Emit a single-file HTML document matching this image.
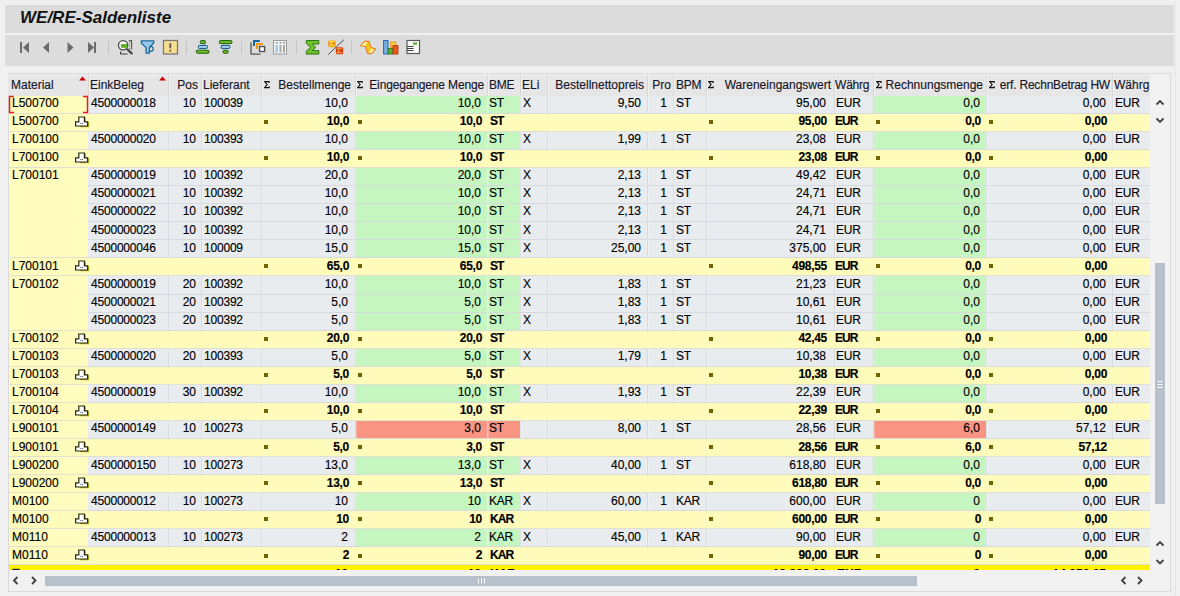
<!DOCTYPE html>
<html><head><meta charset="utf-8"><style>
html,body{margin:0;padding:0;}
body{width:1180px;height:596px;overflow:hidden;background:#f0f0f0;position:relative;font-family:"Liberation Sans",sans-serif;}
#g div, #g svg{position:absolute;}
#g div{box-sizing:border-box;}
.t,.tb{font-size:12px;line-height:17px;height:17px;color:#000;white-space:nowrap;overflow:visible;-webkit-text-stroke:0.15px #000;}
.tb{font-weight:bold;}
.h{font-size:12px;line-height:19px;height:19px;color:#16162a;white-space:nowrap;-webkit-text-stroke:0.15px #16162a;}
</style></head><body>
<div style="position:absolute;left:5px;top:5px;width:1169px;height:28px;background:#dcdcdc"></div>
<div style="position:absolute;left:20px;top:6px;font:bold italic 17px/24px 'Liberation Sans',sans-serif;color:#111">WE/RE-Saldenliste</div>
<div style="position:absolute;left:5px;top:35px;width:1169px;height:31px;background:#dcdcdc"></div>
<svg style="position:absolute;left:0;top:30px" width="440" height="36" viewBox="0 30 440 36">
 <g fill="#6c6c6c">
  <rect x="20" y="42" width="2" height="11"/>
  <path d="M29 42L23 47.5L29 53z"/>
  <path d="M49 42L43 47.5L49 53z"/>
  <path d="M67.5 42L73.5 47.5L67.5 53z"/>
  <path d="M88 42L94 47.5L88 53z"/>
  <rect x="94" y="42" width="2" height="11"/>
 </g>
 <g fill="#c2c2c2">
  <rect x="108" y="41" width="1" height="13"/>
  <rect x="186" y="41" width="1" height="13"/>
  <rect x="241" y="41" width="1" height="13"/>
  <rect x="296" y="41" width="1" height="13"/>
  <rect x="351" y="41" width="1" height="13"/>
 </g>
 <!-- find -->
 <g>
  <path d="M128.8 40.6h2.8v8.8" fill="none" stroke="#555" stroke-width="1.1"/>
  <path d="M120.6 51.6v2.4h7" fill="none" stroke="#444" stroke-width="1.2"/>
  <path d="M129.7 42v1M129.7 44v1M129.7 46v1M129.7 48v1" stroke="#5aa82a" stroke-width="1.1"/>
  <circle cx="123.1" cy="45.3" r="4.6" fill="#fff" stroke="#444" stroke-width="1.3"/>
  <path d="M120.9 44.1h6.5v3.7h-6.5z" fill="#5cb020"/>
  <path d="M127.6 49.5l4 3.8" stroke="#4a4a4a" stroke-width="2.4" stroke-linecap="round"/>
 </g>
 <!-- filter -->
 <g>
  <path d="M141.3 40.8h12.4v2.2l-4.4 4.6v5.6h-3.2v-5.6l-4.8-4.6z" fill="#9ccaec" stroke="#17689e" stroke-width="1.3" stroke-linejoin="round"/>
  <path d="M149.4 46.4c2.6-0.4 3.9 1 3.9 2.6s-1.4 2.6-3.9 2.3" fill="none" stroke="#17689e" stroke-width="1.3"/>
 </g>
 <!-- exception -->
 <g>
  <rect x="163.5" y="40.5" width="14" height="13.5" fill="#f6de8e" stroke="#787878" stroke-width="1.3"/>
  <rect x="169.4" y="43.3" width="1.8" height="5" fill="#555"/>
  <rect x="169.4" y="49.8" width="1.8" height="1.8" fill="#555"/>
 </g>
 <!-- sort asc -->
 <g stroke="#1f5a10" stroke-width="1">
  <rect x="200.4" y="40.6" width="5" height="3" rx="0.8" fill="#6cc020"/>
  <rect x="198.4" y="45.4" width="9" height="3" rx="0.8" fill="#a4d6f4" stroke="#0e5088"/>
  <rect x="196.4" y="50.2" width="12.5" height="3" rx="0.8" fill="#6cc020"/>
 </g>
 <g stroke="#1f5a10" stroke-width="1">
  <rect x="219.4" y="40.6" width="12.5" height="3" rx="0.8" fill="#6cc020"/>
  <rect x="221.2" y="45.4" width="8.6" height="3" rx="0.8" fill="#a4d6f4" stroke="#0e5088"/>
  <rect x="223.2" y="50.2" width="4.8" height="3" rx="0.8" fill="#6cc020"/>
 </g>
 <!-- layout -->
 <g>
  <path d="M251 42.2v12h9.5" fill="none" stroke="#585858" stroke-width="1.3"/>
  <path d="M254 46v-5h5.8" fill="none" stroke="#1462a8" stroke-width="2"/>
  <path d="M257 49v-5h5.8" fill="none" stroke="#f49a00" stroke-width="2"/>
  <rect x="259.6" y="46.5" width="5" height="5" fill="#fff" stroke="#505050" stroke-width="1.4"/>
 </g>
 <!-- columns -->
 <g>
  <rect x="273.5" y="40.5" width="13" height="13.5" fill="#f6f6f6" stroke="#9a9a9a" stroke-width="1"/>
  <rect x="275.5" y="42" width="2.4" height="1.6" fill="#8ab4d8"/>
  <rect x="279.5" y="42" width="2" height="1.6" fill="#9a9a9a"/>
  <rect x="283" y="42" width="2" height="1.6" fill="#9a9a9a"/>
  <rect x="275.5" y="45" width="2.4" height="7.5" fill="#9cc4e4"/>
  <rect x="279.5" y="45" width="2" height="7.5" fill="#a8a8a8"/>
  <rect x="283" y="45" width="2" height="7.5" fill="#a8a8a8"/>
 </g>
 <!-- sigma -->
 <g>
  <path d="M306.3 40.5h12.5v3.5h-6.5l3.5 3.3-3.5 3.3h6.5v3.5h-12.5v-3l4.3-3.8-4.3-3.8z" fill="#6cc424" stroke="#2a6a14" stroke-width="0.9" stroke-linejoin="round"/>
 </g>
 <g>
  <rect x="328.3" y="40.4" width="7.2" height="6.8" rx="1" fill="#f09010"/>
  <path d="M334 42.2v-0.8h-4.2l2.2 2.2-2.2 2.2h4.3v-0.8" fill="none" stroke="#ffe040" stroke-width="1.1"/>
  <rect x="335.9" y="47.3" width="7.2" height="7" rx="1" fill="#d83a10"/>
  <path d="M341.6 49.1v-0.8h-4.2l2.2 2.2-2.2 2.2h4.3v-0.8" fill="none" stroke="#f8a040" stroke-width="1.1"/>
  <path d="M328.3 54.5L343.8 39.8" stroke="#3a3a3a" stroke-width="0.9"/>
 </g>
 <!-- ribbon -->
 <g stroke-linejoin="round">
  <path d="M360.2 45.8L364.6 41.2L368.8 41.2L371 47.5L375.8 49L371.6 53.8L367.6 53.6L365.4 46.4z" fill="#f9c418" stroke="#e8701c" stroke-width="1"/>
  <path d="M361.4 45.5L365 42L367.4 42L365 45.7z" fill="#fff0b8"/>
  <path d="M369 53L371.3 48.4L374.6 49.2L371.2 53z" fill="#fff0b8"/>
 </g>
 <!-- chart -->
 <g>
  <rect x="383.6" y="40.5" width="4.4" height="13.5" fill="#7ab0e0" stroke="#1a68b8" stroke-width="1"/>
  <rect x="390.8" y="42" width="5" height="5.5" fill="#ffd040" stroke="#f08a10" stroke-width="0.9"/>
  <rect x="388.3" y="48.5" width="4.6" height="5.5" fill="#5ab22c" stroke="#2e7a1a" stroke-width="0.9"/>
  <rect x="393" y="45.5" width="5" height="8.5" fill="#e85a1e" stroke="#b03a10" stroke-width="0.9"/>
 </g>
 <!-- text doc -->
 <g>
  <rect x="407" y="40.5" width="12.5" height="13" fill="#fff" stroke="#5a5a5a" stroke-width="1.2"/>
  <rect x="413" y="42.4" width="4" height="2.3" fill="#58b02c"/>
  <path d="M407 46.5h6.6M407 48.5h6.6M407 50.5h6.6" stroke="#444" stroke-width="1"/>
 </g>
</svg>

<div style="position:absolute;left:8px;top:73px;width:1163px;height:519px;background:#f2f2f2;border:1px solid #dadada;box-sizing:border-box"></div>
<div id="g" style="position:absolute;left:0;top:0;width:1180px;height:570px;overflow:hidden">
<div style="left:8px;top:73px;width:1142px;height:23px;background:#e6e6e6"></div>
<div style="left:8px;top:73px;width:1142px;height:1px;background:#dcdcdc"></div>
<div style="left:8px;top:74px;width:1142px;height:3px;background:#eaeaea"></div>
<div style="left:88px;top:75px;width:1px;height:21px;background:#d6d6d6"></div>
<div style="left:89px;top:75px;width:1px;height:21px;background:#f2f2f2"></div>
<div style="left:168px;top:75px;width:1px;height:21px;background:#d6d6d6"></div>
<div style="left:169px;top:75px;width:1px;height:21px;background:#f2f2f2"></div>
<div style="left:201px;top:75px;width:1px;height:21px;background:#d6d6d6"></div>
<div style="left:202px;top:75px;width:1px;height:21px;background:#f2f2f2"></div>
<div style="left:261px;top:75px;width:1px;height:21px;background:#d6d6d6"></div>
<div style="left:262px;top:75px;width:1px;height:21px;background:#f2f2f2"></div>
<div style="left:355px;top:75px;width:1px;height:21px;background:#d6d6d6"></div>
<div style="left:356px;top:75px;width:1px;height:21px;background:#f2f2f2"></div>
<div style="left:487px;top:75px;width:1px;height:21px;background:#d6d6d6"></div>
<div style="left:488px;top:75px;width:1px;height:21px;background:#f2f2f2"></div>
<div style="left:520px;top:75px;width:1px;height:21px;background:#d6d6d6"></div>
<div style="left:521px;top:75px;width:1px;height:21px;background:#f2f2f2"></div>
<div style="left:547px;top:75px;width:1px;height:21px;background:#d6d6d6"></div>
<div style="left:548px;top:75px;width:1px;height:21px;background:#f2f2f2"></div>
<div style="left:647px;top:75px;width:1px;height:21px;background:#d6d6d6"></div>
<div style="left:648px;top:75px;width:1px;height:21px;background:#f2f2f2"></div>
<div style="left:673px;top:75px;width:1px;height:21px;background:#d6d6d6"></div>
<div style="left:674px;top:75px;width:1px;height:21px;background:#f2f2f2"></div>
<div style="left:706px;top:75px;width:1px;height:21px;background:#d6d6d6"></div>
<div style="left:707px;top:75px;width:1px;height:21px;background:#f2f2f2"></div>
<div style="left:834px;top:75px;width:1px;height:21px;background:#d6d6d6"></div>
<div style="left:835px;top:75px;width:1px;height:21px;background:#f2f2f2"></div>
<div style="left:873px;top:75px;width:1px;height:21px;background:#d6d6d6"></div>
<div style="left:874px;top:75px;width:1px;height:21px;background:#f2f2f2"></div>
<div style="left:986px;top:75px;width:1px;height:21px;background:#d6d6d6"></div>
<div style="left:987px;top:75px;width:1px;height:21px;background:#f2f2f2"></div>
<div style="left:1112px;top:75px;width:1px;height:21px;background:#d6d6d6"></div>
<div style="left:1113px;top:75px;width:1px;height:21px;background:#f2f2f2"></div>
<div class="h" style="left:11px;top:76px;width:80px;letter-spacing:0px">Material</div>
<div class="h" style="left:90px;top:76px;width:80px;letter-spacing:0px">EinkBeleg</div>
<div class="h" style="left:168px;top:76px;width:30px;text-align:right;letter-spacing:0px">Pos</div>
<div class="h" style="left:203px;top:76px;width:60px;letter-spacing:0px">Lieferant</div>
<svg style="position:absolute;left:264px;top:81px" width="7" height="8" viewBox="0 0 7 8"><path d="M5.1 1.9V0.6H0.7L3.1 3.6L0.7 6.6H5.2V5.3" fill="none" stroke="#111" stroke-width="1.1"/></svg>
<div class="h" style="left:261px;top:76px;width:90px;text-align:right;letter-spacing:0px">Bestellmenge</div>
<svg style="position:absolute;left:357px;top:81px" width="7" height="8" viewBox="0 0 7 8"><path d="M5.1 1.9V0.6H0.7L3.1 3.6L0.7 6.6H5.2V5.3" fill="none" stroke="#111" stroke-width="1.1"/></svg>
<div class="h" style="left:355px;top:76px;width:129px;text-align:right;letter-spacing:-0.15px">Eingegangene Menge</div>
<div class="h" style="left:489px;top:76px;width:33px;letter-spacing:-0.3px">BME</div>
<div class="h" style="left:522px;top:76px;width:27px;letter-spacing:0px">ELi</div>
<div class="h" style="left:547px;top:76px;width:97px;text-align:right;letter-spacing:0px">Bestellnettopreis</div>
<div class="h" style="left:647px;top:76px;width:24px;text-align:right;letter-spacing:0px">Pro</div>
<div class="h" style="left:676px;top:76px;width:33px;letter-spacing:-0.3px">BPM</div>
<svg style="position:absolute;left:708px;top:81px" width="7" height="8" viewBox="0 0 7 8"><path d="M5.1 1.9V0.6H0.7L3.1 3.6L0.7 6.6H5.2V5.3" fill="none" stroke="#111" stroke-width="1.1"/></svg>
<div class="h" style="left:706px;top:76px;width:125px;text-align:right;letter-spacing:0px">Wareneingangswert</div>
<div class="h" style="left:835px;top:76px;width:39px;letter-spacing:-0.2px">Währg</div>
<svg style="position:absolute;left:876px;top:81px" width="7" height="8" viewBox="0 0 7 8"><path d="M5.1 1.9V0.6H0.7L3.1 3.6L0.7 6.6H5.2V5.3" fill="none" stroke="#111" stroke-width="1.1"/></svg>
<div class="h" style="left:873px;top:76px;width:110px;text-align:right;letter-spacing:0px">Rechnungsmenge</div>
<svg style="position:absolute;left:989px;top:81px" width="7" height="8" viewBox="0 0 7 8"><path d="M5.1 1.9V0.6H0.7L3.1 3.6L0.7 6.6H5.2V5.3" fill="none" stroke="#111" stroke-width="1.1"/></svg>
<div class="h" style="left:986px;top:76px;width:124px;text-align:right;letter-spacing:-0.2px">erf. RechnBetrag HW</div>
<div class="h" style="left:1114px;top:76px;width:38px;letter-spacing:0px">Währg</div>
<svg style="position:absolute;left:79px;top:76px" width="8" height="5"><path d="M0 4.5L3.5 0.5L7 4.5z" fill="#cc0000"/></svg>
<svg style="position:absolute;left:159px;top:76px" width="8" height="5"><path d="M0 4.5L3.5 0.5L7 4.5z" fill="#cc0000"/></svg>
<div style="left:88px;top:96px;width:80px;height:18px;background:#e9ecef;"></div>
<div style="left:168px;top:96px;width:33px;height:18px;background:#e9ecef;"></div>
<div style="left:201px;top:96px;width:60px;height:18px;background:#e9ecef;"></div>
<div style="left:261px;top:96px;width:94px;height:18px;background:#e9ecef;"></div>
<div style="left:355px;top:96px;width:132px;height:18px;background:#c5f6c0;"></div>
<div style="left:487px;top:96px;width:33px;height:18px;background:#c5f6c0;"></div>
<div style="left:520px;top:96px;width:27px;height:18px;background:#e9ecef;"></div>
<div style="left:547px;top:96px;width:100px;height:18px;background:#e9ecef;"></div>
<div style="left:647px;top:96px;width:26px;height:18px;background:#e9ecef;"></div>
<div style="left:673px;top:96px;width:33px;height:18px;background:#e9ecef;"></div>
<div style="left:706px;top:96px;width:128px;height:18px;background:#e9ecef;"></div>
<div style="left:834px;top:96px;width:39px;height:18px;background:#e9ecef;"></div>
<div style="left:873px;top:96px;width:113px;height:18px;background:#c5f6c0;"></div>
<div style="left:986px;top:96px;width:126px;height:18px;background:#e9ecef;"></div>
<div style="left:1112px;top:96px;width:38px;height:18px;background:#e9ecef;"></div>
<div style="left:168px;top:96px;width:1px;height:18px;background:#d8dadf"></div>
<div style="left:169px;top:96px;width:1px;height:17px;background:rgba(255,255,255,0.25)"></div>
<div style="left:201px;top:96px;width:1px;height:18px;background:#d8dadf"></div>
<div style="left:202px;top:96px;width:1px;height:17px;background:rgba(255,255,255,0.25)"></div>
<div style="left:261px;top:96px;width:1px;height:18px;background:#d8dadf"></div>
<div style="left:262px;top:96px;width:1px;height:17px;background:rgba(255,255,255,0.25)"></div>
<div style="left:355px;top:96px;width:1px;height:18px;background:#d8dadf"></div>
<div style="left:356px;top:96px;width:1px;height:17px;background:rgba(255,255,255,0.25)"></div>
<div style="left:487px;top:96px;width:1px;height:18px;background:rgba(255,255,255,0.45)"></div>
<div style="left:488px;top:96px;width:1px;height:17px;background:rgba(255,255,255,0.25)"></div>
<div style="left:520px;top:96px;width:1px;height:18px;background:rgba(0,0,0,0.04)"></div>
<div style="left:521px;top:96px;width:1px;height:17px;background:rgba(255,255,255,0.25)"></div>
<div style="left:547px;top:96px;width:1px;height:18px;background:#d8dadf"></div>
<div style="left:548px;top:96px;width:1px;height:17px;background:rgba(255,255,255,0.25)"></div>
<div style="left:647px;top:96px;width:1px;height:18px;background:#d8dadf"></div>
<div style="left:648px;top:96px;width:1px;height:17px;background:rgba(255,255,255,0.25)"></div>
<div style="left:673px;top:96px;width:1px;height:18px;background:#d8dadf"></div>
<div style="left:674px;top:96px;width:1px;height:17px;background:rgba(255,255,255,0.25)"></div>
<div style="left:706px;top:96px;width:1px;height:18px;background:#d8dadf"></div>
<div style="left:707px;top:96px;width:1px;height:17px;background:rgba(255,255,255,0.25)"></div>
<div style="left:834px;top:96px;width:1px;height:18px;background:#d8dadf"></div>
<div style="left:835px;top:96px;width:1px;height:17px;background:rgba(255,255,255,0.25)"></div>
<div style="left:873px;top:96px;width:1px;height:18px;background:#d8dadf"></div>
<div style="left:874px;top:96px;width:1px;height:17px;background:rgba(255,255,255,0.25)"></div>
<div style="left:986px;top:96px;width:1px;height:18px;background:rgba(0,0,0,0.04)"></div>
<div style="left:987px;top:96px;width:1px;height:17px;background:rgba(255,255,255,0.25)"></div>
<div style="left:1112px;top:96px;width:1px;height:18px;background:#d8dadf"></div>
<div style="left:1113px;top:96px;width:1px;height:17px;background:rgba(255,255,255,0.25)"></div>
<div style="left:88px;top:113px;width:1062px;height:1px;background:#d8dadf;"></div>
<div class="t" style="left:91px;top:95px;width:77px;letter-spacing:-0.2px">4500000018</div>
<div class="t" style="left:168px;top:95px;width:28px;text-align:right;">10</div>
<div class="t" style="left:204px;top:95px;width:57px;letter-spacing:-0.2px">100039</div>
<div class="t" style="left:261px;top:95px;width:87px;text-align:right;">10,0</div>
<div class="t" style="left:355px;top:95px;width:126px;text-align:right;">10,0</div>
<div class="t" style="left:489px;top:95px;width:30px;letter-spacing:-0.2px">ST</div>
<div class="t" style="left:523px;top:95px;width:24px;letter-spacing:-0.2px">X</div>
<div class="t" style="left:547px;top:95px;width:94px;text-align:right;">9,50</div>
<div class="t" style="left:647px;top:95px;width:20px;text-align:right;">1</div>
<div class="t" style="left:676px;top:95px;width:30px;letter-spacing:-0.2px">ST</div>
<div class="t" style="left:706px;top:95px;width:120px;text-align:right;">95,00</div>
<div class="t" style="left:836px;top:95px;width:36px;letter-spacing:-0.2px">EUR</div>
<div class="t" style="left:873px;top:95px;width:107px;text-align:right;">0,0</div>
<div class="t" style="left:986px;top:95px;width:120px;text-align:right;">0,00</div>
<div class="t" style="left:1115px;top:95px;width:35px;letter-spacing:-0.2px">EUR</div>
<div style="left:88px;top:114px;width:1062px;height:18px;background:#fffcbb;"></div>
<div style="left:88px;top:131px;width:1062px;height:1px;background:#e2e0d0;"></div>
<div class="tb" style="left:261px;top:113px;width:88px;text-align:right;letter-spacing:-0.3px">10,0</div>
<div class="tb" style="left:355px;top:113px;width:127px;text-align:right;letter-spacing:-0.3px">10,0</div>
<div class="tb" style="left:490px;top:113px;width:30px;letter-spacing:-0.9px">ST</div>
<div class="tb" style="left:706px;top:113px;width:121px;text-align:right;letter-spacing:-0.3px">95,00</div>
<div class="tb" style="left:835px;top:113px;width:36px;letter-spacing:-0.9px">EUR</div>
<div class="tb" style="left:873px;top:113px;width:108px;text-align:right;letter-spacing:-0.3px">0,0</div>
<div class="tb" style="left:986px;top:113px;width:121px;text-align:right;letter-spacing:-0.3px">0,00</div>
<div style="left:264px;top:120px;width:4px;height:4px;background:#6e6400;"></div>
<div style="left:358px;top:120px;width:4px;height:4px;background:#6e6400;"></div>
<div style="left:709px;top:120px;width:4px;height:4px;background:#6e6400;"></div>
<div style="left:876px;top:120px;width:4px;height:4px;background:#6e6400;"></div>
<div style="left:989px;top:120px;width:4px;height:4px;background:#6e6400;"></div>
<div style="left:88px;top:132px;width:80px;height:18px;background:#e9ecef;"></div>
<div style="left:168px;top:132px;width:33px;height:18px;background:#e9ecef;"></div>
<div style="left:201px;top:132px;width:60px;height:18px;background:#e9ecef;"></div>
<div style="left:261px;top:132px;width:94px;height:18px;background:#e9ecef;"></div>
<div style="left:355px;top:132px;width:132px;height:18px;background:#c5f6c0;"></div>
<div style="left:487px;top:132px;width:33px;height:18px;background:#c5f6c0;"></div>
<div style="left:520px;top:132px;width:27px;height:18px;background:#e9ecef;"></div>
<div style="left:547px;top:132px;width:100px;height:18px;background:#e9ecef;"></div>
<div style="left:647px;top:132px;width:26px;height:18px;background:#e9ecef;"></div>
<div style="left:673px;top:132px;width:33px;height:18px;background:#e9ecef;"></div>
<div style="left:706px;top:132px;width:128px;height:18px;background:#e9ecef;"></div>
<div style="left:834px;top:132px;width:39px;height:18px;background:#e9ecef;"></div>
<div style="left:873px;top:132px;width:113px;height:18px;background:#c5f6c0;"></div>
<div style="left:986px;top:132px;width:126px;height:18px;background:#e9ecef;"></div>
<div style="left:1112px;top:132px;width:38px;height:18px;background:#e9ecef;"></div>
<div style="left:168px;top:132px;width:1px;height:18px;background:#d8dadf"></div>
<div style="left:169px;top:132px;width:1px;height:17px;background:rgba(255,255,255,0.25)"></div>
<div style="left:201px;top:132px;width:1px;height:18px;background:#d8dadf"></div>
<div style="left:202px;top:132px;width:1px;height:17px;background:rgba(255,255,255,0.25)"></div>
<div style="left:261px;top:132px;width:1px;height:18px;background:#d8dadf"></div>
<div style="left:262px;top:132px;width:1px;height:17px;background:rgba(255,255,255,0.25)"></div>
<div style="left:355px;top:132px;width:1px;height:18px;background:#d8dadf"></div>
<div style="left:356px;top:132px;width:1px;height:17px;background:rgba(255,255,255,0.25)"></div>
<div style="left:487px;top:132px;width:1px;height:18px;background:rgba(255,255,255,0.45)"></div>
<div style="left:488px;top:132px;width:1px;height:17px;background:rgba(255,255,255,0.25)"></div>
<div style="left:520px;top:132px;width:1px;height:18px;background:rgba(0,0,0,0.04)"></div>
<div style="left:521px;top:132px;width:1px;height:17px;background:rgba(255,255,255,0.25)"></div>
<div style="left:547px;top:132px;width:1px;height:18px;background:#d8dadf"></div>
<div style="left:548px;top:132px;width:1px;height:17px;background:rgba(255,255,255,0.25)"></div>
<div style="left:647px;top:132px;width:1px;height:18px;background:#d8dadf"></div>
<div style="left:648px;top:132px;width:1px;height:17px;background:rgba(255,255,255,0.25)"></div>
<div style="left:673px;top:132px;width:1px;height:18px;background:#d8dadf"></div>
<div style="left:674px;top:132px;width:1px;height:17px;background:rgba(255,255,255,0.25)"></div>
<div style="left:706px;top:132px;width:1px;height:18px;background:#d8dadf"></div>
<div style="left:707px;top:132px;width:1px;height:17px;background:rgba(255,255,255,0.25)"></div>
<div style="left:834px;top:132px;width:1px;height:18px;background:#d8dadf"></div>
<div style="left:835px;top:132px;width:1px;height:17px;background:rgba(255,255,255,0.25)"></div>
<div style="left:873px;top:132px;width:1px;height:18px;background:#d8dadf"></div>
<div style="left:874px;top:132px;width:1px;height:17px;background:rgba(255,255,255,0.25)"></div>
<div style="left:986px;top:132px;width:1px;height:18px;background:rgba(0,0,0,0.04)"></div>
<div style="left:987px;top:132px;width:1px;height:17px;background:rgba(255,255,255,0.25)"></div>
<div style="left:1112px;top:132px;width:1px;height:18px;background:#d8dadf"></div>
<div style="left:1113px;top:132px;width:1px;height:17px;background:rgba(255,255,255,0.25)"></div>
<div style="left:88px;top:149px;width:1062px;height:1px;background:#d8dadf;"></div>
<div class="t" style="left:91px;top:131px;width:77px;letter-spacing:-0.2px">4500000020</div>
<div class="t" style="left:168px;top:131px;width:28px;text-align:right;">10</div>
<div class="t" style="left:204px;top:131px;width:57px;letter-spacing:-0.2px">100393</div>
<div class="t" style="left:261px;top:131px;width:87px;text-align:right;">10,0</div>
<div class="t" style="left:355px;top:131px;width:126px;text-align:right;">10,0</div>
<div class="t" style="left:489px;top:131px;width:30px;letter-spacing:-0.2px">ST</div>
<div class="t" style="left:523px;top:131px;width:24px;letter-spacing:-0.2px">X</div>
<div class="t" style="left:547px;top:131px;width:94px;text-align:right;">1,99</div>
<div class="t" style="left:647px;top:131px;width:20px;text-align:right;">1</div>
<div class="t" style="left:676px;top:131px;width:30px;letter-spacing:-0.2px">ST</div>
<div class="t" style="left:706px;top:131px;width:120px;text-align:right;">23,08</div>
<div class="t" style="left:836px;top:131px;width:36px;letter-spacing:-0.2px">EUR</div>
<div class="t" style="left:873px;top:131px;width:107px;text-align:right;">0,0</div>
<div class="t" style="left:986px;top:131px;width:120px;text-align:right;">0,00</div>
<div class="t" style="left:1115px;top:131px;width:35px;letter-spacing:-0.2px">EUR</div>
<div style="left:88px;top:150px;width:1062px;height:18px;background:#fffcbb;"></div>
<div style="left:88px;top:167px;width:1062px;height:1px;background:#e2e0d0;"></div>
<div class="tb" style="left:261px;top:149px;width:88px;text-align:right;letter-spacing:-0.3px">10,0</div>
<div class="tb" style="left:355px;top:149px;width:127px;text-align:right;letter-spacing:-0.3px">10,0</div>
<div class="tb" style="left:490px;top:149px;width:30px;letter-spacing:-0.9px">ST</div>
<div class="tb" style="left:706px;top:149px;width:121px;text-align:right;letter-spacing:-0.3px">23,08</div>
<div class="tb" style="left:835px;top:149px;width:36px;letter-spacing:-0.9px">EUR</div>
<div class="tb" style="left:873px;top:149px;width:108px;text-align:right;letter-spacing:-0.3px">0,0</div>
<div class="tb" style="left:986px;top:149px;width:121px;text-align:right;letter-spacing:-0.3px">0,00</div>
<div style="left:264px;top:156px;width:4px;height:4px;background:#6e6400;"></div>
<div style="left:358px;top:156px;width:4px;height:4px;background:#6e6400;"></div>
<div style="left:709px;top:156px;width:4px;height:4px;background:#6e6400;"></div>
<div style="left:876px;top:156px;width:4px;height:4px;background:#6e6400;"></div>
<div style="left:989px;top:156px;width:4px;height:4px;background:#6e6400;"></div>
<div style="left:88px;top:168px;width:80px;height:18px;background:#e9ecef;"></div>
<div style="left:168px;top:168px;width:33px;height:18px;background:#e9ecef;"></div>
<div style="left:201px;top:168px;width:60px;height:18px;background:#e9ecef;"></div>
<div style="left:261px;top:168px;width:94px;height:18px;background:#e9ecef;"></div>
<div style="left:355px;top:168px;width:132px;height:18px;background:#c5f6c0;"></div>
<div style="left:487px;top:168px;width:33px;height:18px;background:#c5f6c0;"></div>
<div style="left:520px;top:168px;width:27px;height:18px;background:#e9ecef;"></div>
<div style="left:547px;top:168px;width:100px;height:18px;background:#e9ecef;"></div>
<div style="left:647px;top:168px;width:26px;height:18px;background:#e9ecef;"></div>
<div style="left:673px;top:168px;width:33px;height:18px;background:#e9ecef;"></div>
<div style="left:706px;top:168px;width:128px;height:18px;background:#e9ecef;"></div>
<div style="left:834px;top:168px;width:39px;height:18px;background:#e9ecef;"></div>
<div style="left:873px;top:168px;width:113px;height:18px;background:#c5f6c0;"></div>
<div style="left:986px;top:168px;width:126px;height:18px;background:#e9ecef;"></div>
<div style="left:1112px;top:168px;width:38px;height:18px;background:#e9ecef;"></div>
<div style="left:168px;top:168px;width:1px;height:18px;background:#d8dadf"></div>
<div style="left:169px;top:168px;width:1px;height:17px;background:rgba(255,255,255,0.25)"></div>
<div style="left:201px;top:168px;width:1px;height:18px;background:#d8dadf"></div>
<div style="left:202px;top:168px;width:1px;height:17px;background:rgba(255,255,255,0.25)"></div>
<div style="left:261px;top:168px;width:1px;height:18px;background:#d8dadf"></div>
<div style="left:262px;top:168px;width:1px;height:17px;background:rgba(255,255,255,0.25)"></div>
<div style="left:355px;top:168px;width:1px;height:18px;background:#d8dadf"></div>
<div style="left:356px;top:168px;width:1px;height:17px;background:rgba(255,255,255,0.25)"></div>
<div style="left:487px;top:168px;width:1px;height:18px;background:rgba(255,255,255,0.45)"></div>
<div style="left:488px;top:168px;width:1px;height:17px;background:rgba(255,255,255,0.25)"></div>
<div style="left:520px;top:168px;width:1px;height:18px;background:rgba(0,0,0,0.04)"></div>
<div style="left:521px;top:168px;width:1px;height:17px;background:rgba(255,255,255,0.25)"></div>
<div style="left:547px;top:168px;width:1px;height:18px;background:#d8dadf"></div>
<div style="left:548px;top:168px;width:1px;height:17px;background:rgba(255,255,255,0.25)"></div>
<div style="left:647px;top:168px;width:1px;height:18px;background:#d8dadf"></div>
<div style="left:648px;top:168px;width:1px;height:17px;background:rgba(255,255,255,0.25)"></div>
<div style="left:673px;top:168px;width:1px;height:18px;background:#d8dadf"></div>
<div style="left:674px;top:168px;width:1px;height:17px;background:rgba(255,255,255,0.25)"></div>
<div style="left:706px;top:168px;width:1px;height:18px;background:#d8dadf"></div>
<div style="left:707px;top:168px;width:1px;height:17px;background:rgba(255,255,255,0.25)"></div>
<div style="left:834px;top:168px;width:1px;height:18px;background:#d8dadf"></div>
<div style="left:835px;top:168px;width:1px;height:17px;background:rgba(255,255,255,0.25)"></div>
<div style="left:873px;top:168px;width:1px;height:18px;background:#d8dadf"></div>
<div style="left:874px;top:168px;width:1px;height:17px;background:rgba(255,255,255,0.25)"></div>
<div style="left:986px;top:168px;width:1px;height:18px;background:rgba(0,0,0,0.04)"></div>
<div style="left:987px;top:168px;width:1px;height:17px;background:rgba(255,255,255,0.25)"></div>
<div style="left:1112px;top:168px;width:1px;height:18px;background:#d8dadf"></div>
<div style="left:1113px;top:168px;width:1px;height:17px;background:rgba(255,255,255,0.25)"></div>
<div style="left:88px;top:185px;width:1062px;height:1px;background:#d8dadf;"></div>
<div class="t" style="left:91px;top:167px;width:77px;letter-spacing:-0.2px">4500000019</div>
<div class="t" style="left:168px;top:167px;width:28px;text-align:right;">10</div>
<div class="t" style="left:204px;top:167px;width:57px;letter-spacing:-0.2px">100392</div>
<div class="t" style="left:261px;top:167px;width:87px;text-align:right;">20,0</div>
<div class="t" style="left:355px;top:167px;width:126px;text-align:right;">20,0</div>
<div class="t" style="left:489px;top:167px;width:30px;letter-spacing:-0.2px">ST</div>
<div class="t" style="left:523px;top:167px;width:24px;letter-spacing:-0.2px">X</div>
<div class="t" style="left:547px;top:167px;width:94px;text-align:right;">2,13</div>
<div class="t" style="left:647px;top:167px;width:20px;text-align:right;">1</div>
<div class="t" style="left:676px;top:167px;width:30px;letter-spacing:-0.2px">ST</div>
<div class="t" style="left:706px;top:167px;width:120px;text-align:right;">49,42</div>
<div class="t" style="left:836px;top:167px;width:36px;letter-spacing:-0.2px">EUR</div>
<div class="t" style="left:873px;top:167px;width:107px;text-align:right;">0,0</div>
<div class="t" style="left:986px;top:167px;width:120px;text-align:right;">0,00</div>
<div class="t" style="left:1115px;top:167px;width:35px;letter-spacing:-0.2px">EUR</div>
<div style="left:88px;top:186px;width:80px;height:18px;background:#e9ecef;"></div>
<div style="left:168px;top:186px;width:33px;height:18px;background:#e9ecef;"></div>
<div style="left:201px;top:186px;width:60px;height:18px;background:#e9ecef;"></div>
<div style="left:261px;top:186px;width:94px;height:18px;background:#e9ecef;"></div>
<div style="left:355px;top:186px;width:132px;height:18px;background:#c5f6c0;"></div>
<div style="left:487px;top:186px;width:33px;height:18px;background:#c5f6c0;"></div>
<div style="left:520px;top:186px;width:27px;height:18px;background:#e9ecef;"></div>
<div style="left:547px;top:186px;width:100px;height:18px;background:#e9ecef;"></div>
<div style="left:647px;top:186px;width:26px;height:18px;background:#e9ecef;"></div>
<div style="left:673px;top:186px;width:33px;height:18px;background:#e9ecef;"></div>
<div style="left:706px;top:186px;width:128px;height:18px;background:#e9ecef;"></div>
<div style="left:834px;top:186px;width:39px;height:18px;background:#e9ecef;"></div>
<div style="left:873px;top:186px;width:113px;height:18px;background:#c5f6c0;"></div>
<div style="left:986px;top:186px;width:126px;height:18px;background:#e9ecef;"></div>
<div style="left:1112px;top:186px;width:38px;height:18px;background:#e9ecef;"></div>
<div style="left:168px;top:186px;width:1px;height:18px;background:#d8dadf"></div>
<div style="left:169px;top:186px;width:1px;height:17px;background:rgba(255,255,255,0.25)"></div>
<div style="left:201px;top:186px;width:1px;height:18px;background:#d8dadf"></div>
<div style="left:202px;top:186px;width:1px;height:17px;background:rgba(255,255,255,0.25)"></div>
<div style="left:261px;top:186px;width:1px;height:18px;background:#d8dadf"></div>
<div style="left:262px;top:186px;width:1px;height:17px;background:rgba(255,255,255,0.25)"></div>
<div style="left:355px;top:186px;width:1px;height:18px;background:#d8dadf"></div>
<div style="left:356px;top:186px;width:1px;height:17px;background:rgba(255,255,255,0.25)"></div>
<div style="left:487px;top:186px;width:1px;height:18px;background:rgba(255,255,255,0.45)"></div>
<div style="left:488px;top:186px;width:1px;height:17px;background:rgba(255,255,255,0.25)"></div>
<div style="left:520px;top:186px;width:1px;height:18px;background:rgba(0,0,0,0.04)"></div>
<div style="left:521px;top:186px;width:1px;height:17px;background:rgba(255,255,255,0.25)"></div>
<div style="left:547px;top:186px;width:1px;height:18px;background:#d8dadf"></div>
<div style="left:548px;top:186px;width:1px;height:17px;background:rgba(255,255,255,0.25)"></div>
<div style="left:647px;top:186px;width:1px;height:18px;background:#d8dadf"></div>
<div style="left:648px;top:186px;width:1px;height:17px;background:rgba(255,255,255,0.25)"></div>
<div style="left:673px;top:186px;width:1px;height:18px;background:#d8dadf"></div>
<div style="left:674px;top:186px;width:1px;height:17px;background:rgba(255,255,255,0.25)"></div>
<div style="left:706px;top:186px;width:1px;height:18px;background:#d8dadf"></div>
<div style="left:707px;top:186px;width:1px;height:17px;background:rgba(255,255,255,0.25)"></div>
<div style="left:834px;top:186px;width:1px;height:18px;background:#d8dadf"></div>
<div style="left:835px;top:186px;width:1px;height:17px;background:rgba(255,255,255,0.25)"></div>
<div style="left:873px;top:186px;width:1px;height:18px;background:#d8dadf"></div>
<div style="left:874px;top:186px;width:1px;height:17px;background:rgba(255,255,255,0.25)"></div>
<div style="left:986px;top:186px;width:1px;height:18px;background:rgba(0,0,0,0.04)"></div>
<div style="left:987px;top:186px;width:1px;height:17px;background:rgba(255,255,255,0.25)"></div>
<div style="left:1112px;top:186px;width:1px;height:18px;background:#d8dadf"></div>
<div style="left:1113px;top:186px;width:1px;height:17px;background:rgba(255,255,255,0.25)"></div>
<div style="left:88px;top:203px;width:1062px;height:1px;background:#d8dadf;"></div>
<div class="t" style="left:91px;top:185px;width:77px;letter-spacing:-0.2px">4500000021</div>
<div class="t" style="left:168px;top:185px;width:28px;text-align:right;">10</div>
<div class="t" style="left:204px;top:185px;width:57px;letter-spacing:-0.2px">100392</div>
<div class="t" style="left:261px;top:185px;width:87px;text-align:right;">10,0</div>
<div class="t" style="left:355px;top:185px;width:126px;text-align:right;">10,0</div>
<div class="t" style="left:489px;top:185px;width:30px;letter-spacing:-0.2px">ST</div>
<div class="t" style="left:523px;top:185px;width:24px;letter-spacing:-0.2px">X</div>
<div class="t" style="left:547px;top:185px;width:94px;text-align:right;">2,13</div>
<div class="t" style="left:647px;top:185px;width:20px;text-align:right;">1</div>
<div class="t" style="left:676px;top:185px;width:30px;letter-spacing:-0.2px">ST</div>
<div class="t" style="left:706px;top:185px;width:120px;text-align:right;">24,71</div>
<div class="t" style="left:836px;top:185px;width:36px;letter-spacing:-0.2px">EUR</div>
<div class="t" style="left:873px;top:185px;width:107px;text-align:right;">0,0</div>
<div class="t" style="left:986px;top:185px;width:120px;text-align:right;">0,00</div>
<div class="t" style="left:1115px;top:185px;width:35px;letter-spacing:-0.2px">EUR</div>
<div style="left:88px;top:204px;width:80px;height:18px;background:#e9ecef;"></div>
<div style="left:168px;top:204px;width:33px;height:18px;background:#e9ecef;"></div>
<div style="left:201px;top:204px;width:60px;height:18px;background:#e9ecef;"></div>
<div style="left:261px;top:204px;width:94px;height:18px;background:#e9ecef;"></div>
<div style="left:355px;top:204px;width:132px;height:18px;background:#c5f6c0;"></div>
<div style="left:487px;top:204px;width:33px;height:18px;background:#c5f6c0;"></div>
<div style="left:520px;top:204px;width:27px;height:18px;background:#e9ecef;"></div>
<div style="left:547px;top:204px;width:100px;height:18px;background:#e9ecef;"></div>
<div style="left:647px;top:204px;width:26px;height:18px;background:#e9ecef;"></div>
<div style="left:673px;top:204px;width:33px;height:18px;background:#e9ecef;"></div>
<div style="left:706px;top:204px;width:128px;height:18px;background:#e9ecef;"></div>
<div style="left:834px;top:204px;width:39px;height:18px;background:#e9ecef;"></div>
<div style="left:873px;top:204px;width:113px;height:18px;background:#c5f6c0;"></div>
<div style="left:986px;top:204px;width:126px;height:18px;background:#e9ecef;"></div>
<div style="left:1112px;top:204px;width:38px;height:18px;background:#e9ecef;"></div>
<div style="left:168px;top:204px;width:1px;height:18px;background:#d8dadf"></div>
<div style="left:169px;top:204px;width:1px;height:17px;background:rgba(255,255,255,0.25)"></div>
<div style="left:201px;top:204px;width:1px;height:18px;background:#d8dadf"></div>
<div style="left:202px;top:204px;width:1px;height:17px;background:rgba(255,255,255,0.25)"></div>
<div style="left:261px;top:204px;width:1px;height:18px;background:#d8dadf"></div>
<div style="left:262px;top:204px;width:1px;height:17px;background:rgba(255,255,255,0.25)"></div>
<div style="left:355px;top:204px;width:1px;height:18px;background:#d8dadf"></div>
<div style="left:356px;top:204px;width:1px;height:17px;background:rgba(255,255,255,0.25)"></div>
<div style="left:487px;top:204px;width:1px;height:18px;background:rgba(255,255,255,0.45)"></div>
<div style="left:488px;top:204px;width:1px;height:17px;background:rgba(255,255,255,0.25)"></div>
<div style="left:520px;top:204px;width:1px;height:18px;background:rgba(0,0,0,0.04)"></div>
<div style="left:521px;top:204px;width:1px;height:17px;background:rgba(255,255,255,0.25)"></div>
<div style="left:547px;top:204px;width:1px;height:18px;background:#d8dadf"></div>
<div style="left:548px;top:204px;width:1px;height:17px;background:rgba(255,255,255,0.25)"></div>
<div style="left:647px;top:204px;width:1px;height:18px;background:#d8dadf"></div>
<div style="left:648px;top:204px;width:1px;height:17px;background:rgba(255,255,255,0.25)"></div>
<div style="left:673px;top:204px;width:1px;height:18px;background:#d8dadf"></div>
<div style="left:674px;top:204px;width:1px;height:17px;background:rgba(255,255,255,0.25)"></div>
<div style="left:706px;top:204px;width:1px;height:18px;background:#d8dadf"></div>
<div style="left:707px;top:204px;width:1px;height:17px;background:rgba(255,255,255,0.25)"></div>
<div style="left:834px;top:204px;width:1px;height:18px;background:#d8dadf"></div>
<div style="left:835px;top:204px;width:1px;height:17px;background:rgba(255,255,255,0.25)"></div>
<div style="left:873px;top:204px;width:1px;height:18px;background:#d8dadf"></div>
<div style="left:874px;top:204px;width:1px;height:17px;background:rgba(255,255,255,0.25)"></div>
<div style="left:986px;top:204px;width:1px;height:18px;background:rgba(0,0,0,0.04)"></div>
<div style="left:987px;top:204px;width:1px;height:17px;background:rgba(255,255,255,0.25)"></div>
<div style="left:1112px;top:204px;width:1px;height:18px;background:#d8dadf"></div>
<div style="left:1113px;top:204px;width:1px;height:17px;background:rgba(255,255,255,0.25)"></div>
<div style="left:88px;top:221px;width:1062px;height:1px;background:#d8dadf;"></div>
<div class="t" style="left:91px;top:203px;width:77px;letter-spacing:-0.2px">4500000022</div>
<div class="t" style="left:168px;top:203px;width:28px;text-align:right;">10</div>
<div class="t" style="left:204px;top:203px;width:57px;letter-spacing:-0.2px">100392</div>
<div class="t" style="left:261px;top:203px;width:87px;text-align:right;">10,0</div>
<div class="t" style="left:355px;top:203px;width:126px;text-align:right;">10,0</div>
<div class="t" style="left:489px;top:203px;width:30px;letter-spacing:-0.2px">ST</div>
<div class="t" style="left:523px;top:203px;width:24px;letter-spacing:-0.2px">X</div>
<div class="t" style="left:547px;top:203px;width:94px;text-align:right;">2,13</div>
<div class="t" style="left:647px;top:203px;width:20px;text-align:right;">1</div>
<div class="t" style="left:676px;top:203px;width:30px;letter-spacing:-0.2px">ST</div>
<div class="t" style="left:706px;top:203px;width:120px;text-align:right;">24,71</div>
<div class="t" style="left:836px;top:203px;width:36px;letter-spacing:-0.2px">EUR</div>
<div class="t" style="left:873px;top:203px;width:107px;text-align:right;">0,0</div>
<div class="t" style="left:986px;top:203px;width:120px;text-align:right;">0,00</div>
<div class="t" style="left:1115px;top:203px;width:35px;letter-spacing:-0.2px">EUR</div>
<div style="left:88px;top:222px;width:80px;height:18px;background:#e9ecef;"></div>
<div style="left:168px;top:222px;width:33px;height:18px;background:#e9ecef;"></div>
<div style="left:201px;top:222px;width:60px;height:18px;background:#e9ecef;"></div>
<div style="left:261px;top:222px;width:94px;height:18px;background:#e9ecef;"></div>
<div style="left:355px;top:222px;width:132px;height:18px;background:#c5f6c0;"></div>
<div style="left:487px;top:222px;width:33px;height:18px;background:#c5f6c0;"></div>
<div style="left:520px;top:222px;width:27px;height:18px;background:#e9ecef;"></div>
<div style="left:547px;top:222px;width:100px;height:18px;background:#e9ecef;"></div>
<div style="left:647px;top:222px;width:26px;height:18px;background:#e9ecef;"></div>
<div style="left:673px;top:222px;width:33px;height:18px;background:#e9ecef;"></div>
<div style="left:706px;top:222px;width:128px;height:18px;background:#e9ecef;"></div>
<div style="left:834px;top:222px;width:39px;height:18px;background:#e9ecef;"></div>
<div style="left:873px;top:222px;width:113px;height:18px;background:#c5f6c0;"></div>
<div style="left:986px;top:222px;width:126px;height:18px;background:#e9ecef;"></div>
<div style="left:1112px;top:222px;width:38px;height:18px;background:#e9ecef;"></div>
<div style="left:168px;top:222px;width:1px;height:18px;background:#d8dadf"></div>
<div style="left:169px;top:222px;width:1px;height:17px;background:rgba(255,255,255,0.25)"></div>
<div style="left:201px;top:222px;width:1px;height:18px;background:#d8dadf"></div>
<div style="left:202px;top:222px;width:1px;height:17px;background:rgba(255,255,255,0.25)"></div>
<div style="left:261px;top:222px;width:1px;height:18px;background:#d8dadf"></div>
<div style="left:262px;top:222px;width:1px;height:17px;background:rgba(255,255,255,0.25)"></div>
<div style="left:355px;top:222px;width:1px;height:18px;background:#d8dadf"></div>
<div style="left:356px;top:222px;width:1px;height:17px;background:rgba(255,255,255,0.25)"></div>
<div style="left:487px;top:222px;width:1px;height:18px;background:rgba(255,255,255,0.45)"></div>
<div style="left:488px;top:222px;width:1px;height:17px;background:rgba(255,255,255,0.25)"></div>
<div style="left:520px;top:222px;width:1px;height:18px;background:rgba(0,0,0,0.04)"></div>
<div style="left:521px;top:222px;width:1px;height:17px;background:rgba(255,255,255,0.25)"></div>
<div style="left:547px;top:222px;width:1px;height:18px;background:#d8dadf"></div>
<div style="left:548px;top:222px;width:1px;height:17px;background:rgba(255,255,255,0.25)"></div>
<div style="left:647px;top:222px;width:1px;height:18px;background:#d8dadf"></div>
<div style="left:648px;top:222px;width:1px;height:17px;background:rgba(255,255,255,0.25)"></div>
<div style="left:673px;top:222px;width:1px;height:18px;background:#d8dadf"></div>
<div style="left:674px;top:222px;width:1px;height:17px;background:rgba(255,255,255,0.25)"></div>
<div style="left:706px;top:222px;width:1px;height:18px;background:#d8dadf"></div>
<div style="left:707px;top:222px;width:1px;height:17px;background:rgba(255,255,255,0.25)"></div>
<div style="left:834px;top:222px;width:1px;height:18px;background:#d8dadf"></div>
<div style="left:835px;top:222px;width:1px;height:17px;background:rgba(255,255,255,0.25)"></div>
<div style="left:873px;top:222px;width:1px;height:18px;background:#d8dadf"></div>
<div style="left:874px;top:222px;width:1px;height:17px;background:rgba(255,255,255,0.25)"></div>
<div style="left:986px;top:222px;width:1px;height:18px;background:rgba(0,0,0,0.04)"></div>
<div style="left:987px;top:222px;width:1px;height:17px;background:rgba(255,255,255,0.25)"></div>
<div style="left:1112px;top:222px;width:1px;height:18px;background:#d8dadf"></div>
<div style="left:1113px;top:222px;width:1px;height:17px;background:rgba(255,255,255,0.25)"></div>
<div style="left:88px;top:239px;width:1062px;height:1px;background:#d8dadf;"></div>
<div class="t" style="left:91px;top:222px;width:77px;letter-spacing:-0.2px">4500000023</div>
<div class="t" style="left:168px;top:222px;width:28px;text-align:right;">10</div>
<div class="t" style="left:204px;top:222px;width:57px;letter-spacing:-0.2px">100392</div>
<div class="t" style="left:261px;top:222px;width:87px;text-align:right;">10,0</div>
<div class="t" style="left:355px;top:222px;width:126px;text-align:right;">10,0</div>
<div class="t" style="left:489px;top:222px;width:30px;letter-spacing:-0.2px">ST</div>
<div class="t" style="left:523px;top:222px;width:24px;letter-spacing:-0.2px">X</div>
<div class="t" style="left:547px;top:222px;width:94px;text-align:right;">2,13</div>
<div class="t" style="left:647px;top:222px;width:20px;text-align:right;">1</div>
<div class="t" style="left:676px;top:222px;width:30px;letter-spacing:-0.2px">ST</div>
<div class="t" style="left:706px;top:222px;width:120px;text-align:right;">24,71</div>
<div class="t" style="left:836px;top:222px;width:36px;letter-spacing:-0.2px">EUR</div>
<div class="t" style="left:873px;top:222px;width:107px;text-align:right;">0,0</div>
<div class="t" style="left:986px;top:222px;width:120px;text-align:right;">0,00</div>
<div class="t" style="left:1115px;top:222px;width:35px;letter-spacing:-0.2px">EUR</div>
<div style="left:88px;top:240px;width:80px;height:18px;background:#e9ecef;"></div>
<div style="left:168px;top:240px;width:33px;height:18px;background:#e9ecef;"></div>
<div style="left:201px;top:240px;width:60px;height:18px;background:#e9ecef;"></div>
<div style="left:261px;top:240px;width:94px;height:18px;background:#e9ecef;"></div>
<div style="left:355px;top:240px;width:132px;height:18px;background:#c5f6c0;"></div>
<div style="left:487px;top:240px;width:33px;height:18px;background:#c5f6c0;"></div>
<div style="left:520px;top:240px;width:27px;height:18px;background:#e9ecef;"></div>
<div style="left:547px;top:240px;width:100px;height:18px;background:#e9ecef;"></div>
<div style="left:647px;top:240px;width:26px;height:18px;background:#e9ecef;"></div>
<div style="left:673px;top:240px;width:33px;height:18px;background:#e9ecef;"></div>
<div style="left:706px;top:240px;width:128px;height:18px;background:#e9ecef;"></div>
<div style="left:834px;top:240px;width:39px;height:18px;background:#e9ecef;"></div>
<div style="left:873px;top:240px;width:113px;height:18px;background:#c5f6c0;"></div>
<div style="left:986px;top:240px;width:126px;height:18px;background:#e9ecef;"></div>
<div style="left:1112px;top:240px;width:38px;height:18px;background:#e9ecef;"></div>
<div style="left:168px;top:240px;width:1px;height:18px;background:#d8dadf"></div>
<div style="left:169px;top:240px;width:1px;height:17px;background:rgba(255,255,255,0.25)"></div>
<div style="left:201px;top:240px;width:1px;height:18px;background:#d8dadf"></div>
<div style="left:202px;top:240px;width:1px;height:17px;background:rgba(255,255,255,0.25)"></div>
<div style="left:261px;top:240px;width:1px;height:18px;background:#d8dadf"></div>
<div style="left:262px;top:240px;width:1px;height:17px;background:rgba(255,255,255,0.25)"></div>
<div style="left:355px;top:240px;width:1px;height:18px;background:#d8dadf"></div>
<div style="left:356px;top:240px;width:1px;height:17px;background:rgba(255,255,255,0.25)"></div>
<div style="left:487px;top:240px;width:1px;height:18px;background:rgba(255,255,255,0.45)"></div>
<div style="left:488px;top:240px;width:1px;height:17px;background:rgba(255,255,255,0.25)"></div>
<div style="left:520px;top:240px;width:1px;height:18px;background:rgba(0,0,0,0.04)"></div>
<div style="left:521px;top:240px;width:1px;height:17px;background:rgba(255,255,255,0.25)"></div>
<div style="left:547px;top:240px;width:1px;height:18px;background:#d8dadf"></div>
<div style="left:548px;top:240px;width:1px;height:17px;background:rgba(255,255,255,0.25)"></div>
<div style="left:647px;top:240px;width:1px;height:18px;background:#d8dadf"></div>
<div style="left:648px;top:240px;width:1px;height:17px;background:rgba(255,255,255,0.25)"></div>
<div style="left:673px;top:240px;width:1px;height:18px;background:#d8dadf"></div>
<div style="left:674px;top:240px;width:1px;height:17px;background:rgba(255,255,255,0.25)"></div>
<div style="left:706px;top:240px;width:1px;height:18px;background:#d8dadf"></div>
<div style="left:707px;top:240px;width:1px;height:17px;background:rgba(255,255,255,0.25)"></div>
<div style="left:834px;top:240px;width:1px;height:18px;background:#d8dadf"></div>
<div style="left:835px;top:240px;width:1px;height:17px;background:rgba(255,255,255,0.25)"></div>
<div style="left:873px;top:240px;width:1px;height:18px;background:#d8dadf"></div>
<div style="left:874px;top:240px;width:1px;height:17px;background:rgba(255,255,255,0.25)"></div>
<div style="left:986px;top:240px;width:1px;height:18px;background:rgba(0,0,0,0.04)"></div>
<div style="left:987px;top:240px;width:1px;height:17px;background:rgba(255,255,255,0.25)"></div>
<div style="left:1112px;top:240px;width:1px;height:18px;background:#d8dadf"></div>
<div style="left:1113px;top:240px;width:1px;height:17px;background:rgba(255,255,255,0.25)"></div>
<div style="left:88px;top:257px;width:1062px;height:1px;background:#d8dadf;"></div>
<div class="t" style="left:91px;top:240px;width:77px;letter-spacing:-0.2px">4500000046</div>
<div class="t" style="left:168px;top:240px;width:28px;text-align:right;">10</div>
<div class="t" style="left:204px;top:240px;width:57px;letter-spacing:-0.2px">100009</div>
<div class="t" style="left:261px;top:240px;width:87px;text-align:right;">15,0</div>
<div class="t" style="left:355px;top:240px;width:126px;text-align:right;">15,0</div>
<div class="t" style="left:489px;top:240px;width:30px;letter-spacing:-0.2px">ST</div>
<div class="t" style="left:523px;top:240px;width:24px;letter-spacing:-0.2px">X</div>
<div class="t" style="left:547px;top:240px;width:94px;text-align:right;">25,00</div>
<div class="t" style="left:647px;top:240px;width:20px;text-align:right;">1</div>
<div class="t" style="left:676px;top:240px;width:30px;letter-spacing:-0.2px">ST</div>
<div class="t" style="left:706px;top:240px;width:120px;text-align:right;">375,00</div>
<div class="t" style="left:836px;top:240px;width:36px;letter-spacing:-0.2px">EUR</div>
<div class="t" style="left:873px;top:240px;width:107px;text-align:right;">0,0</div>
<div class="t" style="left:986px;top:240px;width:120px;text-align:right;">0,00</div>
<div class="t" style="left:1115px;top:240px;width:35px;letter-spacing:-0.2px">EUR</div>
<div style="left:88px;top:258px;width:1062px;height:18px;background:#fffcbb;"></div>
<div style="left:88px;top:275px;width:1062px;height:1px;background:#e2e0d0;"></div>
<div class="tb" style="left:261px;top:258px;width:88px;text-align:right;letter-spacing:-0.3px">65,0</div>
<div class="tb" style="left:355px;top:258px;width:127px;text-align:right;letter-spacing:-0.3px">65,0</div>
<div class="tb" style="left:490px;top:258px;width:30px;letter-spacing:-0.9px">ST</div>
<div class="tb" style="left:706px;top:258px;width:121px;text-align:right;letter-spacing:-0.3px">498,55</div>
<div class="tb" style="left:835px;top:258px;width:36px;letter-spacing:-0.9px">EUR</div>
<div class="tb" style="left:873px;top:258px;width:108px;text-align:right;letter-spacing:-0.3px">0,0</div>
<div class="tb" style="left:986px;top:258px;width:121px;text-align:right;letter-spacing:-0.3px">0,00</div>
<div style="left:264px;top:264px;width:4px;height:4px;background:#6e6400;"></div>
<div style="left:358px;top:264px;width:4px;height:4px;background:#6e6400;"></div>
<div style="left:709px;top:264px;width:4px;height:4px;background:#6e6400;"></div>
<div style="left:876px;top:264px;width:4px;height:4px;background:#6e6400;"></div>
<div style="left:989px;top:264px;width:4px;height:4px;background:#6e6400;"></div>
<div style="left:88px;top:276px;width:80px;height:19px;background:#e9ecef;"></div>
<div style="left:168px;top:276px;width:33px;height:19px;background:#e9ecef;"></div>
<div style="left:201px;top:276px;width:60px;height:19px;background:#e9ecef;"></div>
<div style="left:261px;top:276px;width:94px;height:19px;background:#e9ecef;"></div>
<div style="left:355px;top:276px;width:132px;height:19px;background:#c5f6c0;"></div>
<div style="left:487px;top:276px;width:33px;height:19px;background:#c5f6c0;"></div>
<div style="left:520px;top:276px;width:27px;height:19px;background:#e9ecef;"></div>
<div style="left:547px;top:276px;width:100px;height:19px;background:#e9ecef;"></div>
<div style="left:647px;top:276px;width:26px;height:19px;background:#e9ecef;"></div>
<div style="left:673px;top:276px;width:33px;height:19px;background:#e9ecef;"></div>
<div style="left:706px;top:276px;width:128px;height:19px;background:#e9ecef;"></div>
<div style="left:834px;top:276px;width:39px;height:19px;background:#e9ecef;"></div>
<div style="left:873px;top:276px;width:113px;height:19px;background:#c5f6c0;"></div>
<div style="left:986px;top:276px;width:126px;height:19px;background:#e9ecef;"></div>
<div style="left:1112px;top:276px;width:38px;height:19px;background:#e9ecef;"></div>
<div style="left:168px;top:276px;width:1px;height:19px;background:#d8dadf"></div>
<div style="left:169px;top:276px;width:1px;height:18px;background:rgba(255,255,255,0.25)"></div>
<div style="left:201px;top:276px;width:1px;height:19px;background:#d8dadf"></div>
<div style="left:202px;top:276px;width:1px;height:18px;background:rgba(255,255,255,0.25)"></div>
<div style="left:261px;top:276px;width:1px;height:19px;background:#d8dadf"></div>
<div style="left:262px;top:276px;width:1px;height:18px;background:rgba(255,255,255,0.25)"></div>
<div style="left:355px;top:276px;width:1px;height:19px;background:#d8dadf"></div>
<div style="left:356px;top:276px;width:1px;height:18px;background:rgba(255,255,255,0.25)"></div>
<div style="left:487px;top:276px;width:1px;height:19px;background:rgba(255,255,255,0.45)"></div>
<div style="left:488px;top:276px;width:1px;height:18px;background:rgba(255,255,255,0.25)"></div>
<div style="left:520px;top:276px;width:1px;height:19px;background:rgba(0,0,0,0.04)"></div>
<div style="left:521px;top:276px;width:1px;height:18px;background:rgba(255,255,255,0.25)"></div>
<div style="left:547px;top:276px;width:1px;height:19px;background:#d8dadf"></div>
<div style="left:548px;top:276px;width:1px;height:18px;background:rgba(255,255,255,0.25)"></div>
<div style="left:647px;top:276px;width:1px;height:19px;background:#d8dadf"></div>
<div style="left:648px;top:276px;width:1px;height:18px;background:rgba(255,255,255,0.25)"></div>
<div style="left:673px;top:276px;width:1px;height:19px;background:#d8dadf"></div>
<div style="left:674px;top:276px;width:1px;height:18px;background:rgba(255,255,255,0.25)"></div>
<div style="left:706px;top:276px;width:1px;height:19px;background:#d8dadf"></div>
<div style="left:707px;top:276px;width:1px;height:18px;background:rgba(255,255,255,0.25)"></div>
<div style="left:834px;top:276px;width:1px;height:19px;background:#d8dadf"></div>
<div style="left:835px;top:276px;width:1px;height:18px;background:rgba(255,255,255,0.25)"></div>
<div style="left:873px;top:276px;width:1px;height:19px;background:#d8dadf"></div>
<div style="left:874px;top:276px;width:1px;height:18px;background:rgba(255,255,255,0.25)"></div>
<div style="left:986px;top:276px;width:1px;height:19px;background:rgba(0,0,0,0.04)"></div>
<div style="left:987px;top:276px;width:1px;height:18px;background:rgba(255,255,255,0.25)"></div>
<div style="left:1112px;top:276px;width:1px;height:19px;background:#d8dadf"></div>
<div style="left:1113px;top:276px;width:1px;height:18px;background:rgba(255,255,255,0.25)"></div>
<div style="left:88px;top:294px;width:1062px;height:1px;background:#d8dadf;"></div>
<div class="t" style="left:91px;top:276px;width:77px;letter-spacing:-0.2px">4500000019</div>
<div class="t" style="left:168px;top:276px;width:28px;text-align:right;">20</div>
<div class="t" style="left:204px;top:276px;width:57px;letter-spacing:-0.2px">100392</div>
<div class="t" style="left:261px;top:276px;width:87px;text-align:right;">10,0</div>
<div class="t" style="left:355px;top:276px;width:126px;text-align:right;">10,0</div>
<div class="t" style="left:489px;top:276px;width:30px;letter-spacing:-0.2px">ST</div>
<div class="t" style="left:523px;top:276px;width:24px;letter-spacing:-0.2px">X</div>
<div class="t" style="left:547px;top:276px;width:94px;text-align:right;">1,83</div>
<div class="t" style="left:647px;top:276px;width:20px;text-align:right;">1</div>
<div class="t" style="left:676px;top:276px;width:30px;letter-spacing:-0.2px">ST</div>
<div class="t" style="left:706px;top:276px;width:120px;text-align:right;">21,23</div>
<div class="t" style="left:836px;top:276px;width:36px;letter-spacing:-0.2px">EUR</div>
<div class="t" style="left:873px;top:276px;width:107px;text-align:right;">0,0</div>
<div class="t" style="left:986px;top:276px;width:120px;text-align:right;">0,00</div>
<div class="t" style="left:1115px;top:276px;width:35px;letter-spacing:-0.2px">EUR</div>
<div style="left:88px;top:295px;width:80px;height:18px;background:#e9ecef;"></div>
<div style="left:168px;top:295px;width:33px;height:18px;background:#e9ecef;"></div>
<div style="left:201px;top:295px;width:60px;height:18px;background:#e9ecef;"></div>
<div style="left:261px;top:295px;width:94px;height:18px;background:#e9ecef;"></div>
<div style="left:355px;top:295px;width:132px;height:18px;background:#c5f6c0;"></div>
<div style="left:487px;top:295px;width:33px;height:18px;background:#c5f6c0;"></div>
<div style="left:520px;top:295px;width:27px;height:18px;background:#e9ecef;"></div>
<div style="left:547px;top:295px;width:100px;height:18px;background:#e9ecef;"></div>
<div style="left:647px;top:295px;width:26px;height:18px;background:#e9ecef;"></div>
<div style="left:673px;top:295px;width:33px;height:18px;background:#e9ecef;"></div>
<div style="left:706px;top:295px;width:128px;height:18px;background:#e9ecef;"></div>
<div style="left:834px;top:295px;width:39px;height:18px;background:#e9ecef;"></div>
<div style="left:873px;top:295px;width:113px;height:18px;background:#c5f6c0;"></div>
<div style="left:986px;top:295px;width:126px;height:18px;background:#e9ecef;"></div>
<div style="left:1112px;top:295px;width:38px;height:18px;background:#e9ecef;"></div>
<div style="left:168px;top:295px;width:1px;height:18px;background:#d8dadf"></div>
<div style="left:169px;top:295px;width:1px;height:17px;background:rgba(255,255,255,0.25)"></div>
<div style="left:201px;top:295px;width:1px;height:18px;background:#d8dadf"></div>
<div style="left:202px;top:295px;width:1px;height:17px;background:rgba(255,255,255,0.25)"></div>
<div style="left:261px;top:295px;width:1px;height:18px;background:#d8dadf"></div>
<div style="left:262px;top:295px;width:1px;height:17px;background:rgba(255,255,255,0.25)"></div>
<div style="left:355px;top:295px;width:1px;height:18px;background:#d8dadf"></div>
<div style="left:356px;top:295px;width:1px;height:17px;background:rgba(255,255,255,0.25)"></div>
<div style="left:487px;top:295px;width:1px;height:18px;background:rgba(255,255,255,0.45)"></div>
<div style="left:488px;top:295px;width:1px;height:17px;background:rgba(255,255,255,0.25)"></div>
<div style="left:520px;top:295px;width:1px;height:18px;background:rgba(0,0,0,0.04)"></div>
<div style="left:521px;top:295px;width:1px;height:17px;background:rgba(255,255,255,0.25)"></div>
<div style="left:547px;top:295px;width:1px;height:18px;background:#d8dadf"></div>
<div style="left:548px;top:295px;width:1px;height:17px;background:rgba(255,255,255,0.25)"></div>
<div style="left:647px;top:295px;width:1px;height:18px;background:#d8dadf"></div>
<div style="left:648px;top:295px;width:1px;height:17px;background:rgba(255,255,255,0.25)"></div>
<div style="left:673px;top:295px;width:1px;height:18px;background:#d8dadf"></div>
<div style="left:674px;top:295px;width:1px;height:17px;background:rgba(255,255,255,0.25)"></div>
<div style="left:706px;top:295px;width:1px;height:18px;background:#d8dadf"></div>
<div style="left:707px;top:295px;width:1px;height:17px;background:rgba(255,255,255,0.25)"></div>
<div style="left:834px;top:295px;width:1px;height:18px;background:#d8dadf"></div>
<div style="left:835px;top:295px;width:1px;height:17px;background:rgba(255,255,255,0.25)"></div>
<div style="left:873px;top:295px;width:1px;height:18px;background:#d8dadf"></div>
<div style="left:874px;top:295px;width:1px;height:17px;background:rgba(255,255,255,0.25)"></div>
<div style="left:986px;top:295px;width:1px;height:18px;background:rgba(0,0,0,0.04)"></div>
<div style="left:987px;top:295px;width:1px;height:17px;background:rgba(255,255,255,0.25)"></div>
<div style="left:1112px;top:295px;width:1px;height:18px;background:#d8dadf"></div>
<div style="left:1113px;top:295px;width:1px;height:17px;background:rgba(255,255,255,0.25)"></div>
<div style="left:88px;top:312px;width:1062px;height:1px;background:#d8dadf;"></div>
<div class="t" style="left:91px;top:294px;width:77px;letter-spacing:-0.2px">4500000021</div>
<div class="t" style="left:168px;top:294px;width:28px;text-align:right;">20</div>
<div class="t" style="left:204px;top:294px;width:57px;letter-spacing:-0.2px">100392</div>
<div class="t" style="left:261px;top:294px;width:87px;text-align:right;">5,0</div>
<div class="t" style="left:355px;top:294px;width:126px;text-align:right;">5,0</div>
<div class="t" style="left:489px;top:294px;width:30px;letter-spacing:-0.2px">ST</div>
<div class="t" style="left:523px;top:294px;width:24px;letter-spacing:-0.2px">X</div>
<div class="t" style="left:547px;top:294px;width:94px;text-align:right;">1,83</div>
<div class="t" style="left:647px;top:294px;width:20px;text-align:right;">1</div>
<div class="t" style="left:676px;top:294px;width:30px;letter-spacing:-0.2px">ST</div>
<div class="t" style="left:706px;top:294px;width:120px;text-align:right;">10,61</div>
<div class="t" style="left:836px;top:294px;width:36px;letter-spacing:-0.2px">EUR</div>
<div class="t" style="left:873px;top:294px;width:107px;text-align:right;">0,0</div>
<div class="t" style="left:986px;top:294px;width:120px;text-align:right;">0,00</div>
<div class="t" style="left:1115px;top:294px;width:35px;letter-spacing:-0.2px">EUR</div>
<div style="left:88px;top:313px;width:80px;height:18px;background:#e9ecef;"></div>
<div style="left:168px;top:313px;width:33px;height:18px;background:#e9ecef;"></div>
<div style="left:201px;top:313px;width:60px;height:18px;background:#e9ecef;"></div>
<div style="left:261px;top:313px;width:94px;height:18px;background:#e9ecef;"></div>
<div style="left:355px;top:313px;width:132px;height:18px;background:#c5f6c0;"></div>
<div style="left:487px;top:313px;width:33px;height:18px;background:#c5f6c0;"></div>
<div style="left:520px;top:313px;width:27px;height:18px;background:#e9ecef;"></div>
<div style="left:547px;top:313px;width:100px;height:18px;background:#e9ecef;"></div>
<div style="left:647px;top:313px;width:26px;height:18px;background:#e9ecef;"></div>
<div style="left:673px;top:313px;width:33px;height:18px;background:#e9ecef;"></div>
<div style="left:706px;top:313px;width:128px;height:18px;background:#e9ecef;"></div>
<div style="left:834px;top:313px;width:39px;height:18px;background:#e9ecef;"></div>
<div style="left:873px;top:313px;width:113px;height:18px;background:#c5f6c0;"></div>
<div style="left:986px;top:313px;width:126px;height:18px;background:#e9ecef;"></div>
<div style="left:1112px;top:313px;width:38px;height:18px;background:#e9ecef;"></div>
<div style="left:168px;top:313px;width:1px;height:18px;background:#d8dadf"></div>
<div style="left:169px;top:313px;width:1px;height:17px;background:rgba(255,255,255,0.25)"></div>
<div style="left:201px;top:313px;width:1px;height:18px;background:#d8dadf"></div>
<div style="left:202px;top:313px;width:1px;height:17px;background:rgba(255,255,255,0.25)"></div>
<div style="left:261px;top:313px;width:1px;height:18px;background:#d8dadf"></div>
<div style="left:262px;top:313px;width:1px;height:17px;background:rgba(255,255,255,0.25)"></div>
<div style="left:355px;top:313px;width:1px;height:18px;background:#d8dadf"></div>
<div style="left:356px;top:313px;width:1px;height:17px;background:rgba(255,255,255,0.25)"></div>
<div style="left:487px;top:313px;width:1px;height:18px;background:rgba(255,255,255,0.45)"></div>
<div style="left:488px;top:313px;width:1px;height:17px;background:rgba(255,255,255,0.25)"></div>
<div style="left:520px;top:313px;width:1px;height:18px;background:rgba(0,0,0,0.04)"></div>
<div style="left:521px;top:313px;width:1px;height:17px;background:rgba(255,255,255,0.25)"></div>
<div style="left:547px;top:313px;width:1px;height:18px;background:#d8dadf"></div>
<div style="left:548px;top:313px;width:1px;height:17px;background:rgba(255,255,255,0.25)"></div>
<div style="left:647px;top:313px;width:1px;height:18px;background:#d8dadf"></div>
<div style="left:648px;top:313px;width:1px;height:17px;background:rgba(255,255,255,0.25)"></div>
<div style="left:673px;top:313px;width:1px;height:18px;background:#d8dadf"></div>
<div style="left:674px;top:313px;width:1px;height:17px;background:rgba(255,255,255,0.25)"></div>
<div style="left:706px;top:313px;width:1px;height:18px;background:#d8dadf"></div>
<div style="left:707px;top:313px;width:1px;height:17px;background:rgba(255,255,255,0.25)"></div>
<div style="left:834px;top:313px;width:1px;height:18px;background:#d8dadf"></div>
<div style="left:835px;top:313px;width:1px;height:17px;background:rgba(255,255,255,0.25)"></div>
<div style="left:873px;top:313px;width:1px;height:18px;background:#d8dadf"></div>
<div style="left:874px;top:313px;width:1px;height:17px;background:rgba(255,255,255,0.25)"></div>
<div style="left:986px;top:313px;width:1px;height:18px;background:rgba(0,0,0,0.04)"></div>
<div style="left:987px;top:313px;width:1px;height:17px;background:rgba(255,255,255,0.25)"></div>
<div style="left:1112px;top:313px;width:1px;height:18px;background:#d8dadf"></div>
<div style="left:1113px;top:313px;width:1px;height:17px;background:rgba(255,255,255,0.25)"></div>
<div style="left:88px;top:330px;width:1062px;height:1px;background:#d8dadf;"></div>
<div class="t" style="left:91px;top:312px;width:77px;letter-spacing:-0.2px">4500000023</div>
<div class="t" style="left:168px;top:312px;width:28px;text-align:right;">20</div>
<div class="t" style="left:204px;top:312px;width:57px;letter-spacing:-0.2px">100392</div>
<div class="t" style="left:261px;top:312px;width:87px;text-align:right;">5,0</div>
<div class="t" style="left:355px;top:312px;width:126px;text-align:right;">5,0</div>
<div class="t" style="left:489px;top:312px;width:30px;letter-spacing:-0.2px">ST</div>
<div class="t" style="left:523px;top:312px;width:24px;letter-spacing:-0.2px">X</div>
<div class="t" style="left:547px;top:312px;width:94px;text-align:right;">1,83</div>
<div class="t" style="left:647px;top:312px;width:20px;text-align:right;">1</div>
<div class="t" style="left:676px;top:312px;width:30px;letter-spacing:-0.2px">ST</div>
<div class="t" style="left:706px;top:312px;width:120px;text-align:right;">10,61</div>
<div class="t" style="left:836px;top:312px;width:36px;letter-spacing:-0.2px">EUR</div>
<div class="t" style="left:873px;top:312px;width:107px;text-align:right;">0,0</div>
<div class="t" style="left:986px;top:312px;width:120px;text-align:right;">0,00</div>
<div class="t" style="left:1115px;top:312px;width:35px;letter-spacing:-0.2px">EUR</div>
<div style="left:88px;top:331px;width:1062px;height:18px;background:#fffcbb;"></div>
<div style="left:88px;top:348px;width:1062px;height:1px;background:#e2e0d0;"></div>
<div class="tb" style="left:261px;top:330px;width:88px;text-align:right;letter-spacing:-0.3px">20,0</div>
<div class="tb" style="left:355px;top:330px;width:127px;text-align:right;letter-spacing:-0.3px">20,0</div>
<div class="tb" style="left:490px;top:330px;width:30px;letter-spacing:-0.9px">ST</div>
<div class="tb" style="left:706px;top:330px;width:121px;text-align:right;letter-spacing:-0.3px">42,45</div>
<div class="tb" style="left:835px;top:330px;width:36px;letter-spacing:-0.9px">EUR</div>
<div class="tb" style="left:873px;top:330px;width:108px;text-align:right;letter-spacing:-0.3px">0,0</div>
<div class="tb" style="left:986px;top:330px;width:121px;text-align:right;letter-spacing:-0.3px">0,00</div>
<div style="left:264px;top:337px;width:4px;height:4px;background:#6e6400;"></div>
<div style="left:358px;top:337px;width:4px;height:4px;background:#6e6400;"></div>
<div style="left:709px;top:337px;width:4px;height:4px;background:#6e6400;"></div>
<div style="left:876px;top:337px;width:4px;height:4px;background:#6e6400;"></div>
<div style="left:989px;top:337px;width:4px;height:4px;background:#6e6400;"></div>
<div style="left:88px;top:349px;width:80px;height:18px;background:#e9ecef;"></div>
<div style="left:168px;top:349px;width:33px;height:18px;background:#e9ecef;"></div>
<div style="left:201px;top:349px;width:60px;height:18px;background:#e9ecef;"></div>
<div style="left:261px;top:349px;width:94px;height:18px;background:#e9ecef;"></div>
<div style="left:355px;top:349px;width:132px;height:18px;background:#c5f6c0;"></div>
<div style="left:487px;top:349px;width:33px;height:18px;background:#c5f6c0;"></div>
<div style="left:520px;top:349px;width:27px;height:18px;background:#e9ecef;"></div>
<div style="left:547px;top:349px;width:100px;height:18px;background:#e9ecef;"></div>
<div style="left:647px;top:349px;width:26px;height:18px;background:#e9ecef;"></div>
<div style="left:673px;top:349px;width:33px;height:18px;background:#e9ecef;"></div>
<div style="left:706px;top:349px;width:128px;height:18px;background:#e9ecef;"></div>
<div style="left:834px;top:349px;width:39px;height:18px;background:#e9ecef;"></div>
<div style="left:873px;top:349px;width:113px;height:18px;background:#c5f6c0;"></div>
<div style="left:986px;top:349px;width:126px;height:18px;background:#e9ecef;"></div>
<div style="left:1112px;top:349px;width:38px;height:18px;background:#e9ecef;"></div>
<div style="left:168px;top:349px;width:1px;height:18px;background:#d8dadf"></div>
<div style="left:169px;top:349px;width:1px;height:17px;background:rgba(255,255,255,0.25)"></div>
<div style="left:201px;top:349px;width:1px;height:18px;background:#d8dadf"></div>
<div style="left:202px;top:349px;width:1px;height:17px;background:rgba(255,255,255,0.25)"></div>
<div style="left:261px;top:349px;width:1px;height:18px;background:#d8dadf"></div>
<div style="left:262px;top:349px;width:1px;height:17px;background:rgba(255,255,255,0.25)"></div>
<div style="left:355px;top:349px;width:1px;height:18px;background:#d8dadf"></div>
<div style="left:356px;top:349px;width:1px;height:17px;background:rgba(255,255,255,0.25)"></div>
<div style="left:487px;top:349px;width:1px;height:18px;background:rgba(255,255,255,0.45)"></div>
<div style="left:488px;top:349px;width:1px;height:17px;background:rgba(255,255,255,0.25)"></div>
<div style="left:520px;top:349px;width:1px;height:18px;background:rgba(0,0,0,0.04)"></div>
<div style="left:521px;top:349px;width:1px;height:17px;background:rgba(255,255,255,0.25)"></div>
<div style="left:547px;top:349px;width:1px;height:18px;background:#d8dadf"></div>
<div style="left:548px;top:349px;width:1px;height:17px;background:rgba(255,255,255,0.25)"></div>
<div style="left:647px;top:349px;width:1px;height:18px;background:#d8dadf"></div>
<div style="left:648px;top:349px;width:1px;height:17px;background:rgba(255,255,255,0.25)"></div>
<div style="left:673px;top:349px;width:1px;height:18px;background:#d8dadf"></div>
<div style="left:674px;top:349px;width:1px;height:17px;background:rgba(255,255,255,0.25)"></div>
<div style="left:706px;top:349px;width:1px;height:18px;background:#d8dadf"></div>
<div style="left:707px;top:349px;width:1px;height:17px;background:rgba(255,255,255,0.25)"></div>
<div style="left:834px;top:349px;width:1px;height:18px;background:#d8dadf"></div>
<div style="left:835px;top:349px;width:1px;height:17px;background:rgba(255,255,255,0.25)"></div>
<div style="left:873px;top:349px;width:1px;height:18px;background:#d8dadf"></div>
<div style="left:874px;top:349px;width:1px;height:17px;background:rgba(255,255,255,0.25)"></div>
<div style="left:986px;top:349px;width:1px;height:18px;background:rgba(0,0,0,0.04)"></div>
<div style="left:987px;top:349px;width:1px;height:17px;background:rgba(255,255,255,0.25)"></div>
<div style="left:1112px;top:349px;width:1px;height:18px;background:#d8dadf"></div>
<div style="left:1113px;top:349px;width:1px;height:17px;background:rgba(255,255,255,0.25)"></div>
<div style="left:88px;top:366px;width:1062px;height:1px;background:#d8dadf;"></div>
<div class="t" style="left:91px;top:348px;width:77px;letter-spacing:-0.2px">4500000020</div>
<div class="t" style="left:168px;top:348px;width:28px;text-align:right;">20</div>
<div class="t" style="left:204px;top:348px;width:57px;letter-spacing:-0.2px">100393</div>
<div class="t" style="left:261px;top:348px;width:87px;text-align:right;">5,0</div>
<div class="t" style="left:355px;top:348px;width:126px;text-align:right;">5,0</div>
<div class="t" style="left:489px;top:348px;width:30px;letter-spacing:-0.2px">ST</div>
<div class="t" style="left:523px;top:348px;width:24px;letter-spacing:-0.2px">X</div>
<div class="t" style="left:547px;top:348px;width:94px;text-align:right;">1,79</div>
<div class="t" style="left:647px;top:348px;width:20px;text-align:right;">1</div>
<div class="t" style="left:676px;top:348px;width:30px;letter-spacing:-0.2px">ST</div>
<div class="t" style="left:706px;top:348px;width:120px;text-align:right;">10,38</div>
<div class="t" style="left:836px;top:348px;width:36px;letter-spacing:-0.2px">EUR</div>
<div class="t" style="left:873px;top:348px;width:107px;text-align:right;">0,0</div>
<div class="t" style="left:986px;top:348px;width:120px;text-align:right;">0,00</div>
<div class="t" style="left:1115px;top:348px;width:35px;letter-spacing:-0.2px">EUR</div>
<div style="left:88px;top:367px;width:1062px;height:18px;background:#fffcbb;"></div>
<div style="left:88px;top:384px;width:1062px;height:1px;background:#e2e0d0;"></div>
<div class="tb" style="left:261px;top:366px;width:88px;text-align:right;letter-spacing:-0.3px">5,0</div>
<div class="tb" style="left:355px;top:366px;width:127px;text-align:right;letter-spacing:-0.3px">5,0</div>
<div class="tb" style="left:490px;top:366px;width:30px;letter-spacing:-0.9px">ST</div>
<div class="tb" style="left:706px;top:366px;width:121px;text-align:right;letter-spacing:-0.3px">10,38</div>
<div class="tb" style="left:835px;top:366px;width:36px;letter-spacing:-0.9px">EUR</div>
<div class="tb" style="left:873px;top:366px;width:108px;text-align:right;letter-spacing:-0.3px">0,0</div>
<div class="tb" style="left:986px;top:366px;width:121px;text-align:right;letter-spacing:-0.3px">0,00</div>
<div style="left:264px;top:373px;width:4px;height:4px;background:#6e6400;"></div>
<div style="left:358px;top:373px;width:4px;height:4px;background:#6e6400;"></div>
<div style="left:709px;top:373px;width:4px;height:4px;background:#6e6400;"></div>
<div style="left:876px;top:373px;width:4px;height:4px;background:#6e6400;"></div>
<div style="left:989px;top:373px;width:4px;height:4px;background:#6e6400;"></div>
<div style="left:88px;top:385px;width:80px;height:18px;background:#e9ecef;"></div>
<div style="left:168px;top:385px;width:33px;height:18px;background:#e9ecef;"></div>
<div style="left:201px;top:385px;width:60px;height:18px;background:#e9ecef;"></div>
<div style="left:261px;top:385px;width:94px;height:18px;background:#e9ecef;"></div>
<div style="left:355px;top:385px;width:132px;height:18px;background:#c5f6c0;"></div>
<div style="left:487px;top:385px;width:33px;height:18px;background:#c5f6c0;"></div>
<div style="left:520px;top:385px;width:27px;height:18px;background:#e9ecef;"></div>
<div style="left:547px;top:385px;width:100px;height:18px;background:#e9ecef;"></div>
<div style="left:647px;top:385px;width:26px;height:18px;background:#e9ecef;"></div>
<div style="left:673px;top:385px;width:33px;height:18px;background:#e9ecef;"></div>
<div style="left:706px;top:385px;width:128px;height:18px;background:#e9ecef;"></div>
<div style="left:834px;top:385px;width:39px;height:18px;background:#e9ecef;"></div>
<div style="left:873px;top:385px;width:113px;height:18px;background:#c5f6c0;"></div>
<div style="left:986px;top:385px;width:126px;height:18px;background:#e9ecef;"></div>
<div style="left:1112px;top:385px;width:38px;height:18px;background:#e9ecef;"></div>
<div style="left:168px;top:385px;width:1px;height:18px;background:#d8dadf"></div>
<div style="left:169px;top:385px;width:1px;height:17px;background:rgba(255,255,255,0.25)"></div>
<div style="left:201px;top:385px;width:1px;height:18px;background:#d8dadf"></div>
<div style="left:202px;top:385px;width:1px;height:17px;background:rgba(255,255,255,0.25)"></div>
<div style="left:261px;top:385px;width:1px;height:18px;background:#d8dadf"></div>
<div style="left:262px;top:385px;width:1px;height:17px;background:rgba(255,255,255,0.25)"></div>
<div style="left:355px;top:385px;width:1px;height:18px;background:#d8dadf"></div>
<div style="left:356px;top:385px;width:1px;height:17px;background:rgba(255,255,255,0.25)"></div>
<div style="left:487px;top:385px;width:1px;height:18px;background:rgba(255,255,255,0.45)"></div>
<div style="left:488px;top:385px;width:1px;height:17px;background:rgba(255,255,255,0.25)"></div>
<div style="left:520px;top:385px;width:1px;height:18px;background:rgba(0,0,0,0.04)"></div>
<div style="left:521px;top:385px;width:1px;height:17px;background:rgba(255,255,255,0.25)"></div>
<div style="left:547px;top:385px;width:1px;height:18px;background:#d8dadf"></div>
<div style="left:548px;top:385px;width:1px;height:17px;background:rgba(255,255,255,0.25)"></div>
<div style="left:647px;top:385px;width:1px;height:18px;background:#d8dadf"></div>
<div style="left:648px;top:385px;width:1px;height:17px;background:rgba(255,255,255,0.25)"></div>
<div style="left:673px;top:385px;width:1px;height:18px;background:#d8dadf"></div>
<div style="left:674px;top:385px;width:1px;height:17px;background:rgba(255,255,255,0.25)"></div>
<div style="left:706px;top:385px;width:1px;height:18px;background:#d8dadf"></div>
<div style="left:707px;top:385px;width:1px;height:17px;background:rgba(255,255,255,0.25)"></div>
<div style="left:834px;top:385px;width:1px;height:18px;background:#d8dadf"></div>
<div style="left:835px;top:385px;width:1px;height:17px;background:rgba(255,255,255,0.25)"></div>
<div style="left:873px;top:385px;width:1px;height:18px;background:#d8dadf"></div>
<div style="left:874px;top:385px;width:1px;height:17px;background:rgba(255,255,255,0.25)"></div>
<div style="left:986px;top:385px;width:1px;height:18px;background:rgba(0,0,0,0.04)"></div>
<div style="left:987px;top:385px;width:1px;height:17px;background:rgba(255,255,255,0.25)"></div>
<div style="left:1112px;top:385px;width:1px;height:18px;background:#d8dadf"></div>
<div style="left:1113px;top:385px;width:1px;height:17px;background:rgba(255,255,255,0.25)"></div>
<div style="left:88px;top:402px;width:1062px;height:1px;background:#d8dadf;"></div>
<div class="t" style="left:91px;top:384px;width:77px;letter-spacing:-0.2px">4500000019</div>
<div class="t" style="left:168px;top:384px;width:28px;text-align:right;">30</div>
<div class="t" style="left:204px;top:384px;width:57px;letter-spacing:-0.2px">100392</div>
<div class="t" style="left:261px;top:384px;width:87px;text-align:right;">10,0</div>
<div class="t" style="left:355px;top:384px;width:126px;text-align:right;">10,0</div>
<div class="t" style="left:489px;top:384px;width:30px;letter-spacing:-0.2px">ST</div>
<div class="t" style="left:523px;top:384px;width:24px;letter-spacing:-0.2px">X</div>
<div class="t" style="left:547px;top:384px;width:94px;text-align:right;">1,93</div>
<div class="t" style="left:647px;top:384px;width:20px;text-align:right;">1</div>
<div class="t" style="left:676px;top:384px;width:30px;letter-spacing:-0.2px">ST</div>
<div class="t" style="left:706px;top:384px;width:120px;text-align:right;">22,39</div>
<div class="t" style="left:836px;top:384px;width:36px;letter-spacing:-0.2px">EUR</div>
<div class="t" style="left:873px;top:384px;width:107px;text-align:right;">0,0</div>
<div class="t" style="left:986px;top:384px;width:120px;text-align:right;">0,00</div>
<div class="t" style="left:1115px;top:384px;width:35px;letter-spacing:-0.2px">EUR</div>
<div style="left:88px;top:403px;width:1062px;height:18px;background:#fffcbb;"></div>
<div style="left:88px;top:420px;width:1062px;height:1px;background:#e2e0d0;"></div>
<div class="tb" style="left:261px;top:402px;width:88px;text-align:right;letter-spacing:-0.3px">10,0</div>
<div class="tb" style="left:355px;top:402px;width:127px;text-align:right;letter-spacing:-0.3px">10,0</div>
<div class="tb" style="left:490px;top:402px;width:30px;letter-spacing:-0.9px">ST</div>
<div class="tb" style="left:706px;top:402px;width:121px;text-align:right;letter-spacing:-0.3px">22,39</div>
<div class="tb" style="left:835px;top:402px;width:36px;letter-spacing:-0.9px">EUR</div>
<div class="tb" style="left:873px;top:402px;width:108px;text-align:right;letter-spacing:-0.3px">0,0</div>
<div class="tb" style="left:986px;top:402px;width:121px;text-align:right;letter-spacing:-0.3px">0,00</div>
<div style="left:264px;top:409px;width:4px;height:4px;background:#6e6400;"></div>
<div style="left:358px;top:409px;width:4px;height:4px;background:#6e6400;"></div>
<div style="left:709px;top:409px;width:4px;height:4px;background:#6e6400;"></div>
<div style="left:876px;top:409px;width:4px;height:4px;background:#6e6400;"></div>
<div style="left:989px;top:409px;width:4px;height:4px;background:#6e6400;"></div>
<div style="left:88px;top:421px;width:80px;height:18px;background:#e9ecef;"></div>
<div style="left:168px;top:421px;width:33px;height:18px;background:#e9ecef;"></div>
<div style="left:201px;top:421px;width:60px;height:18px;background:#e9ecef;"></div>
<div style="left:261px;top:421px;width:94px;height:18px;background:#e9ecef;"></div>
<div style="left:355px;top:421px;width:132px;height:18px;background:#f99483;"></div>
<div style="left:487px;top:421px;width:33px;height:18px;background:#f99483;"></div>
<div style="left:520px;top:421px;width:27px;height:18px;background:#e9ecef;"></div>
<div style="left:547px;top:421px;width:100px;height:18px;background:#e9ecef;"></div>
<div style="left:647px;top:421px;width:26px;height:18px;background:#e9ecef;"></div>
<div style="left:673px;top:421px;width:33px;height:18px;background:#e9ecef;"></div>
<div style="left:706px;top:421px;width:128px;height:18px;background:#e9ecef;"></div>
<div style="left:834px;top:421px;width:39px;height:18px;background:#e9ecef;"></div>
<div style="left:873px;top:421px;width:113px;height:18px;background:#f99483;"></div>
<div style="left:986px;top:421px;width:126px;height:18px;background:#e9ecef;"></div>
<div style="left:1112px;top:421px;width:38px;height:18px;background:#e9ecef;"></div>
<div style="left:168px;top:421px;width:1px;height:18px;background:#d8dadf"></div>
<div style="left:169px;top:421px;width:1px;height:17px;background:rgba(255,255,255,0.25)"></div>
<div style="left:201px;top:421px;width:1px;height:18px;background:#d8dadf"></div>
<div style="left:202px;top:421px;width:1px;height:17px;background:rgba(255,255,255,0.25)"></div>
<div style="left:261px;top:421px;width:1px;height:18px;background:#d8dadf"></div>
<div style="left:262px;top:421px;width:1px;height:17px;background:rgba(255,255,255,0.25)"></div>
<div style="left:355px;top:421px;width:1px;height:18px;background:#d8dadf"></div>
<div style="left:356px;top:421px;width:1px;height:17px;background:rgba(255,255,255,0.25)"></div>
<div style="left:487px;top:421px;width:1px;height:18px;background:rgba(255,255,255,0.45)"></div>
<div style="left:488px;top:421px;width:1px;height:17px;background:rgba(255,255,255,0.25)"></div>
<div style="left:520px;top:421px;width:1px;height:18px;background:rgba(0,0,0,0.04)"></div>
<div style="left:521px;top:421px;width:1px;height:17px;background:rgba(255,255,255,0.25)"></div>
<div style="left:547px;top:421px;width:1px;height:18px;background:#d8dadf"></div>
<div style="left:548px;top:421px;width:1px;height:17px;background:rgba(255,255,255,0.25)"></div>
<div style="left:647px;top:421px;width:1px;height:18px;background:#d8dadf"></div>
<div style="left:648px;top:421px;width:1px;height:17px;background:rgba(255,255,255,0.25)"></div>
<div style="left:673px;top:421px;width:1px;height:18px;background:#d8dadf"></div>
<div style="left:674px;top:421px;width:1px;height:17px;background:rgba(255,255,255,0.25)"></div>
<div style="left:706px;top:421px;width:1px;height:18px;background:#d8dadf"></div>
<div style="left:707px;top:421px;width:1px;height:17px;background:rgba(255,255,255,0.25)"></div>
<div style="left:834px;top:421px;width:1px;height:18px;background:#d8dadf"></div>
<div style="left:835px;top:421px;width:1px;height:17px;background:rgba(255,255,255,0.25)"></div>
<div style="left:873px;top:421px;width:1px;height:18px;background:#d8dadf"></div>
<div style="left:874px;top:421px;width:1px;height:17px;background:rgba(255,255,255,0.25)"></div>
<div style="left:986px;top:421px;width:1px;height:18px;background:rgba(0,0,0,0.04)"></div>
<div style="left:987px;top:421px;width:1px;height:17px;background:rgba(255,255,255,0.25)"></div>
<div style="left:1112px;top:421px;width:1px;height:18px;background:#d8dadf"></div>
<div style="left:1113px;top:421px;width:1px;height:17px;background:rgba(255,255,255,0.25)"></div>
<div style="left:88px;top:438px;width:1062px;height:1px;background:#d8dadf;"></div>
<div class="t" style="left:91px;top:420px;width:77px;letter-spacing:-0.2px">4500000149</div>
<div class="t" style="left:168px;top:420px;width:28px;text-align:right;">10</div>
<div class="t" style="left:204px;top:420px;width:57px;letter-spacing:-0.2px">100273</div>
<div class="t" style="left:261px;top:420px;width:87px;text-align:right;">5,0</div>
<div class="t" style="left:355px;top:420px;width:126px;text-align:right;">3,0</div>
<div class="t" style="left:489px;top:420px;width:30px;letter-spacing:-0.2px">ST</div>
<div class="t" style="left:547px;top:420px;width:94px;text-align:right;">8,00</div>
<div class="t" style="left:647px;top:420px;width:20px;text-align:right;">1</div>
<div class="t" style="left:676px;top:420px;width:30px;letter-spacing:-0.2px">ST</div>
<div class="t" style="left:706px;top:420px;width:120px;text-align:right;">28,56</div>
<div class="t" style="left:836px;top:420px;width:36px;letter-spacing:-0.2px">EUR</div>
<div class="t" style="left:873px;top:420px;width:107px;text-align:right;">6,0</div>
<div class="t" style="left:986px;top:420px;width:120px;text-align:right;">57,12</div>
<div class="t" style="left:1115px;top:420px;width:35px;letter-spacing:-0.2px">EUR</div>
<div style="left:88px;top:439px;width:1062px;height:18px;background:#fffcbb;"></div>
<div style="left:88px;top:456px;width:1062px;height:1px;background:#e2e0d0;"></div>
<div class="tb" style="left:261px;top:439px;width:88px;text-align:right;letter-spacing:-0.3px">5,0</div>
<div class="tb" style="left:355px;top:439px;width:127px;text-align:right;letter-spacing:-0.3px">3,0</div>
<div class="tb" style="left:490px;top:439px;width:30px;letter-spacing:-0.9px">ST</div>
<div class="tb" style="left:706px;top:439px;width:121px;text-align:right;letter-spacing:-0.3px">28,56</div>
<div class="tb" style="left:835px;top:439px;width:36px;letter-spacing:-0.9px">EUR</div>
<div class="tb" style="left:873px;top:439px;width:108px;text-align:right;letter-spacing:-0.3px">6,0</div>
<div class="tb" style="left:986px;top:439px;width:121px;text-align:right;letter-spacing:-0.3px">57,12</div>
<div style="left:264px;top:445px;width:4px;height:4px;background:#6e6400;"></div>
<div style="left:358px;top:445px;width:4px;height:4px;background:#6e6400;"></div>
<div style="left:709px;top:445px;width:4px;height:4px;background:#6e6400;"></div>
<div style="left:876px;top:445px;width:4px;height:4px;background:#6e6400;"></div>
<div style="left:989px;top:445px;width:4px;height:4px;background:#6e6400;"></div>
<div style="left:88px;top:457px;width:80px;height:18px;background:#e9ecef;"></div>
<div style="left:168px;top:457px;width:33px;height:18px;background:#e9ecef;"></div>
<div style="left:201px;top:457px;width:60px;height:18px;background:#e9ecef;"></div>
<div style="left:261px;top:457px;width:94px;height:18px;background:#e9ecef;"></div>
<div style="left:355px;top:457px;width:132px;height:18px;background:#c5f6c0;"></div>
<div style="left:487px;top:457px;width:33px;height:18px;background:#c5f6c0;"></div>
<div style="left:520px;top:457px;width:27px;height:18px;background:#e9ecef;"></div>
<div style="left:547px;top:457px;width:100px;height:18px;background:#e9ecef;"></div>
<div style="left:647px;top:457px;width:26px;height:18px;background:#e9ecef;"></div>
<div style="left:673px;top:457px;width:33px;height:18px;background:#e9ecef;"></div>
<div style="left:706px;top:457px;width:128px;height:18px;background:#e9ecef;"></div>
<div style="left:834px;top:457px;width:39px;height:18px;background:#e9ecef;"></div>
<div style="left:873px;top:457px;width:113px;height:18px;background:#c5f6c0;"></div>
<div style="left:986px;top:457px;width:126px;height:18px;background:#e9ecef;"></div>
<div style="left:1112px;top:457px;width:38px;height:18px;background:#e9ecef;"></div>
<div style="left:168px;top:457px;width:1px;height:18px;background:#d8dadf"></div>
<div style="left:169px;top:457px;width:1px;height:17px;background:rgba(255,255,255,0.25)"></div>
<div style="left:201px;top:457px;width:1px;height:18px;background:#d8dadf"></div>
<div style="left:202px;top:457px;width:1px;height:17px;background:rgba(255,255,255,0.25)"></div>
<div style="left:261px;top:457px;width:1px;height:18px;background:#d8dadf"></div>
<div style="left:262px;top:457px;width:1px;height:17px;background:rgba(255,255,255,0.25)"></div>
<div style="left:355px;top:457px;width:1px;height:18px;background:#d8dadf"></div>
<div style="left:356px;top:457px;width:1px;height:17px;background:rgba(255,255,255,0.25)"></div>
<div style="left:487px;top:457px;width:1px;height:18px;background:rgba(255,255,255,0.45)"></div>
<div style="left:488px;top:457px;width:1px;height:17px;background:rgba(255,255,255,0.25)"></div>
<div style="left:520px;top:457px;width:1px;height:18px;background:rgba(0,0,0,0.04)"></div>
<div style="left:521px;top:457px;width:1px;height:17px;background:rgba(255,255,255,0.25)"></div>
<div style="left:547px;top:457px;width:1px;height:18px;background:#d8dadf"></div>
<div style="left:548px;top:457px;width:1px;height:17px;background:rgba(255,255,255,0.25)"></div>
<div style="left:647px;top:457px;width:1px;height:18px;background:#d8dadf"></div>
<div style="left:648px;top:457px;width:1px;height:17px;background:rgba(255,255,255,0.25)"></div>
<div style="left:673px;top:457px;width:1px;height:18px;background:#d8dadf"></div>
<div style="left:674px;top:457px;width:1px;height:17px;background:rgba(255,255,255,0.25)"></div>
<div style="left:706px;top:457px;width:1px;height:18px;background:#d8dadf"></div>
<div style="left:707px;top:457px;width:1px;height:17px;background:rgba(255,255,255,0.25)"></div>
<div style="left:834px;top:457px;width:1px;height:18px;background:#d8dadf"></div>
<div style="left:835px;top:457px;width:1px;height:17px;background:rgba(255,255,255,0.25)"></div>
<div style="left:873px;top:457px;width:1px;height:18px;background:#d8dadf"></div>
<div style="left:874px;top:457px;width:1px;height:17px;background:rgba(255,255,255,0.25)"></div>
<div style="left:986px;top:457px;width:1px;height:18px;background:rgba(0,0,0,0.04)"></div>
<div style="left:987px;top:457px;width:1px;height:17px;background:rgba(255,255,255,0.25)"></div>
<div style="left:1112px;top:457px;width:1px;height:18px;background:#d8dadf"></div>
<div style="left:1113px;top:457px;width:1px;height:17px;background:rgba(255,255,255,0.25)"></div>
<div style="left:88px;top:474px;width:1062px;height:1px;background:#d8dadf;"></div>
<div class="t" style="left:91px;top:457px;width:77px;letter-spacing:-0.2px">4500000150</div>
<div class="t" style="left:168px;top:457px;width:28px;text-align:right;">10</div>
<div class="t" style="left:204px;top:457px;width:57px;letter-spacing:-0.2px">100273</div>
<div class="t" style="left:261px;top:457px;width:87px;text-align:right;">13,0</div>
<div class="t" style="left:355px;top:457px;width:126px;text-align:right;">13,0</div>
<div class="t" style="left:489px;top:457px;width:30px;letter-spacing:-0.2px">ST</div>
<div class="t" style="left:523px;top:457px;width:24px;letter-spacing:-0.2px">X</div>
<div class="t" style="left:547px;top:457px;width:94px;text-align:right;">40,00</div>
<div class="t" style="left:647px;top:457px;width:20px;text-align:right;">1</div>
<div class="t" style="left:676px;top:457px;width:30px;letter-spacing:-0.2px">ST</div>
<div class="t" style="left:706px;top:457px;width:120px;text-align:right;">618,80</div>
<div class="t" style="left:836px;top:457px;width:36px;letter-spacing:-0.2px">EUR</div>
<div class="t" style="left:873px;top:457px;width:107px;text-align:right;">0,0</div>
<div class="t" style="left:986px;top:457px;width:120px;text-align:right;">0,00</div>
<div class="t" style="left:1115px;top:457px;width:35px;letter-spacing:-0.2px">EUR</div>
<div style="left:88px;top:475px;width:1062px;height:18px;background:#fffcbb;"></div>
<div style="left:88px;top:492px;width:1062px;height:1px;background:#e2e0d0;"></div>
<div class="tb" style="left:261px;top:475px;width:88px;text-align:right;letter-spacing:-0.3px">13,0</div>
<div class="tb" style="left:355px;top:475px;width:127px;text-align:right;letter-spacing:-0.3px">13,0</div>
<div class="tb" style="left:490px;top:475px;width:30px;letter-spacing:-0.9px">ST</div>
<div class="tb" style="left:706px;top:475px;width:121px;text-align:right;letter-spacing:-0.3px">618,80</div>
<div class="tb" style="left:835px;top:475px;width:36px;letter-spacing:-0.9px">EUR</div>
<div class="tb" style="left:873px;top:475px;width:108px;text-align:right;letter-spacing:-0.3px">0,0</div>
<div class="tb" style="left:986px;top:475px;width:121px;text-align:right;letter-spacing:-0.3px">0,00</div>
<div style="left:264px;top:481px;width:4px;height:4px;background:#6e6400;"></div>
<div style="left:358px;top:481px;width:4px;height:4px;background:#6e6400;"></div>
<div style="left:709px;top:481px;width:4px;height:4px;background:#6e6400;"></div>
<div style="left:876px;top:481px;width:4px;height:4px;background:#6e6400;"></div>
<div style="left:989px;top:481px;width:4px;height:4px;background:#6e6400;"></div>
<div style="left:88px;top:493px;width:80px;height:18px;background:#e9ecef;"></div>
<div style="left:168px;top:493px;width:33px;height:18px;background:#e9ecef;"></div>
<div style="left:201px;top:493px;width:60px;height:18px;background:#e9ecef;"></div>
<div style="left:261px;top:493px;width:94px;height:18px;background:#e9ecef;"></div>
<div style="left:355px;top:493px;width:132px;height:18px;background:#c5f6c0;"></div>
<div style="left:487px;top:493px;width:33px;height:18px;background:#c5f6c0;"></div>
<div style="left:520px;top:493px;width:27px;height:18px;background:#e9ecef;"></div>
<div style="left:547px;top:493px;width:100px;height:18px;background:#e9ecef;"></div>
<div style="left:647px;top:493px;width:26px;height:18px;background:#e9ecef;"></div>
<div style="left:673px;top:493px;width:33px;height:18px;background:#e9ecef;"></div>
<div style="left:706px;top:493px;width:128px;height:18px;background:#e9ecef;"></div>
<div style="left:834px;top:493px;width:39px;height:18px;background:#e9ecef;"></div>
<div style="left:873px;top:493px;width:113px;height:18px;background:#c5f6c0;"></div>
<div style="left:986px;top:493px;width:126px;height:18px;background:#e9ecef;"></div>
<div style="left:1112px;top:493px;width:38px;height:18px;background:#e9ecef;"></div>
<div style="left:168px;top:493px;width:1px;height:18px;background:#d8dadf"></div>
<div style="left:169px;top:493px;width:1px;height:17px;background:rgba(255,255,255,0.25)"></div>
<div style="left:201px;top:493px;width:1px;height:18px;background:#d8dadf"></div>
<div style="left:202px;top:493px;width:1px;height:17px;background:rgba(255,255,255,0.25)"></div>
<div style="left:261px;top:493px;width:1px;height:18px;background:#d8dadf"></div>
<div style="left:262px;top:493px;width:1px;height:17px;background:rgba(255,255,255,0.25)"></div>
<div style="left:355px;top:493px;width:1px;height:18px;background:#d8dadf"></div>
<div style="left:356px;top:493px;width:1px;height:17px;background:rgba(255,255,255,0.25)"></div>
<div style="left:487px;top:493px;width:1px;height:18px;background:rgba(255,255,255,0.45)"></div>
<div style="left:488px;top:493px;width:1px;height:17px;background:rgba(255,255,255,0.25)"></div>
<div style="left:520px;top:493px;width:1px;height:18px;background:rgba(0,0,0,0.04)"></div>
<div style="left:521px;top:493px;width:1px;height:17px;background:rgba(255,255,255,0.25)"></div>
<div style="left:547px;top:493px;width:1px;height:18px;background:#d8dadf"></div>
<div style="left:548px;top:493px;width:1px;height:17px;background:rgba(255,255,255,0.25)"></div>
<div style="left:647px;top:493px;width:1px;height:18px;background:#d8dadf"></div>
<div style="left:648px;top:493px;width:1px;height:17px;background:rgba(255,255,255,0.25)"></div>
<div style="left:673px;top:493px;width:1px;height:18px;background:#d8dadf"></div>
<div style="left:674px;top:493px;width:1px;height:17px;background:rgba(255,255,255,0.25)"></div>
<div style="left:706px;top:493px;width:1px;height:18px;background:#d8dadf"></div>
<div style="left:707px;top:493px;width:1px;height:17px;background:rgba(255,255,255,0.25)"></div>
<div style="left:834px;top:493px;width:1px;height:18px;background:#d8dadf"></div>
<div style="left:835px;top:493px;width:1px;height:17px;background:rgba(255,255,255,0.25)"></div>
<div style="left:873px;top:493px;width:1px;height:18px;background:#d8dadf"></div>
<div style="left:874px;top:493px;width:1px;height:17px;background:rgba(255,255,255,0.25)"></div>
<div style="left:986px;top:493px;width:1px;height:18px;background:rgba(0,0,0,0.04)"></div>
<div style="left:987px;top:493px;width:1px;height:17px;background:rgba(255,255,255,0.25)"></div>
<div style="left:1112px;top:493px;width:1px;height:18px;background:#d8dadf"></div>
<div style="left:1113px;top:493px;width:1px;height:17px;background:rgba(255,255,255,0.25)"></div>
<div style="left:88px;top:510px;width:1062px;height:1px;background:#d8dadf;"></div>
<div class="t" style="left:91px;top:493px;width:77px;letter-spacing:-0.2px">4500000012</div>
<div class="t" style="left:168px;top:493px;width:28px;text-align:right;">10</div>
<div class="t" style="left:204px;top:493px;width:57px;letter-spacing:-0.2px">100273</div>
<div class="t" style="left:261px;top:493px;width:87px;text-align:right;">10</div>
<div class="t" style="left:355px;top:493px;width:126px;text-align:right;">10</div>
<div class="t" style="left:489px;top:493px;width:30px;letter-spacing:-0.2px">KAR</div>
<div class="t" style="left:523px;top:493px;width:24px;letter-spacing:-0.2px">X</div>
<div class="t" style="left:547px;top:493px;width:94px;text-align:right;">60,00</div>
<div class="t" style="left:647px;top:493px;width:20px;text-align:right;">1</div>
<div class="t" style="left:676px;top:493px;width:30px;letter-spacing:-0.2px">KAR</div>
<div class="t" style="left:706px;top:493px;width:120px;text-align:right;">600,00</div>
<div class="t" style="left:836px;top:493px;width:36px;letter-spacing:-0.2px">EUR</div>
<div class="t" style="left:873px;top:493px;width:107px;text-align:right;">0</div>
<div class="t" style="left:986px;top:493px;width:120px;text-align:right;">0,00</div>
<div class="t" style="left:1115px;top:493px;width:35px;letter-spacing:-0.2px">EUR</div>
<div style="left:88px;top:511px;width:1062px;height:18px;background:#fffcbb;"></div>
<div style="left:88px;top:528px;width:1062px;height:1px;background:#e2e0d0;"></div>
<div class="tb" style="left:261px;top:511px;width:88px;text-align:right;letter-spacing:-0.3px">10</div>
<div class="tb" style="left:355px;top:511px;width:127px;text-align:right;letter-spacing:-0.3px">10</div>
<div class="tb" style="left:490px;top:511px;width:30px;letter-spacing:-0.9px">KAR</div>
<div class="tb" style="left:706px;top:511px;width:121px;text-align:right;letter-spacing:-0.3px">600,00</div>
<div class="tb" style="left:835px;top:511px;width:36px;letter-spacing:-0.9px">EUR</div>
<div class="tb" style="left:873px;top:511px;width:108px;text-align:right;letter-spacing:-0.3px">0</div>
<div class="tb" style="left:986px;top:511px;width:121px;text-align:right;letter-spacing:-0.3px">0,00</div>
<div style="left:264px;top:517px;width:4px;height:4px;background:#6e6400;"></div>
<div style="left:358px;top:517px;width:4px;height:4px;background:#6e6400;"></div>
<div style="left:709px;top:517px;width:4px;height:4px;background:#6e6400;"></div>
<div style="left:876px;top:517px;width:4px;height:4px;background:#6e6400;"></div>
<div style="left:989px;top:517px;width:4px;height:4px;background:#6e6400;"></div>
<div style="left:88px;top:529px;width:80px;height:18px;background:#e9ecef;"></div>
<div style="left:168px;top:529px;width:33px;height:18px;background:#e9ecef;"></div>
<div style="left:201px;top:529px;width:60px;height:18px;background:#e9ecef;"></div>
<div style="left:261px;top:529px;width:94px;height:18px;background:#e9ecef;"></div>
<div style="left:355px;top:529px;width:132px;height:18px;background:#c5f6c0;"></div>
<div style="left:487px;top:529px;width:33px;height:18px;background:#c5f6c0;"></div>
<div style="left:520px;top:529px;width:27px;height:18px;background:#e9ecef;"></div>
<div style="left:547px;top:529px;width:100px;height:18px;background:#e9ecef;"></div>
<div style="left:647px;top:529px;width:26px;height:18px;background:#e9ecef;"></div>
<div style="left:673px;top:529px;width:33px;height:18px;background:#e9ecef;"></div>
<div style="left:706px;top:529px;width:128px;height:18px;background:#e9ecef;"></div>
<div style="left:834px;top:529px;width:39px;height:18px;background:#e9ecef;"></div>
<div style="left:873px;top:529px;width:113px;height:18px;background:#c5f6c0;"></div>
<div style="left:986px;top:529px;width:126px;height:18px;background:#e9ecef;"></div>
<div style="left:1112px;top:529px;width:38px;height:18px;background:#e9ecef;"></div>
<div style="left:168px;top:529px;width:1px;height:18px;background:#d8dadf"></div>
<div style="left:169px;top:529px;width:1px;height:17px;background:rgba(255,255,255,0.25)"></div>
<div style="left:201px;top:529px;width:1px;height:18px;background:#d8dadf"></div>
<div style="left:202px;top:529px;width:1px;height:17px;background:rgba(255,255,255,0.25)"></div>
<div style="left:261px;top:529px;width:1px;height:18px;background:#d8dadf"></div>
<div style="left:262px;top:529px;width:1px;height:17px;background:rgba(255,255,255,0.25)"></div>
<div style="left:355px;top:529px;width:1px;height:18px;background:#d8dadf"></div>
<div style="left:356px;top:529px;width:1px;height:17px;background:rgba(255,255,255,0.25)"></div>
<div style="left:487px;top:529px;width:1px;height:18px;background:rgba(255,255,255,0.45)"></div>
<div style="left:488px;top:529px;width:1px;height:17px;background:rgba(255,255,255,0.25)"></div>
<div style="left:520px;top:529px;width:1px;height:18px;background:rgba(0,0,0,0.04)"></div>
<div style="left:521px;top:529px;width:1px;height:17px;background:rgba(255,255,255,0.25)"></div>
<div style="left:547px;top:529px;width:1px;height:18px;background:#d8dadf"></div>
<div style="left:548px;top:529px;width:1px;height:17px;background:rgba(255,255,255,0.25)"></div>
<div style="left:647px;top:529px;width:1px;height:18px;background:#d8dadf"></div>
<div style="left:648px;top:529px;width:1px;height:17px;background:rgba(255,255,255,0.25)"></div>
<div style="left:673px;top:529px;width:1px;height:18px;background:#d8dadf"></div>
<div style="left:674px;top:529px;width:1px;height:17px;background:rgba(255,255,255,0.25)"></div>
<div style="left:706px;top:529px;width:1px;height:18px;background:#d8dadf"></div>
<div style="left:707px;top:529px;width:1px;height:17px;background:rgba(255,255,255,0.25)"></div>
<div style="left:834px;top:529px;width:1px;height:18px;background:#d8dadf"></div>
<div style="left:835px;top:529px;width:1px;height:17px;background:rgba(255,255,255,0.25)"></div>
<div style="left:873px;top:529px;width:1px;height:18px;background:#d8dadf"></div>
<div style="left:874px;top:529px;width:1px;height:17px;background:rgba(255,255,255,0.25)"></div>
<div style="left:986px;top:529px;width:1px;height:18px;background:rgba(0,0,0,0.04)"></div>
<div style="left:987px;top:529px;width:1px;height:17px;background:rgba(255,255,255,0.25)"></div>
<div style="left:1112px;top:529px;width:1px;height:18px;background:#d8dadf"></div>
<div style="left:1113px;top:529px;width:1px;height:17px;background:rgba(255,255,255,0.25)"></div>
<div style="left:88px;top:546px;width:1062px;height:1px;background:#d8dadf;"></div>
<div class="t" style="left:91px;top:529px;width:77px;letter-spacing:-0.2px">4500000013</div>
<div class="t" style="left:168px;top:529px;width:28px;text-align:right;">10</div>
<div class="t" style="left:204px;top:529px;width:57px;letter-spacing:-0.2px">100273</div>
<div class="t" style="left:261px;top:529px;width:87px;text-align:right;">2</div>
<div class="t" style="left:355px;top:529px;width:126px;text-align:right;">2</div>
<div class="t" style="left:489px;top:529px;width:30px;letter-spacing:-0.2px">KAR</div>
<div class="t" style="left:523px;top:529px;width:24px;letter-spacing:-0.2px">X</div>
<div class="t" style="left:547px;top:529px;width:94px;text-align:right;">45,00</div>
<div class="t" style="left:647px;top:529px;width:20px;text-align:right;">1</div>
<div class="t" style="left:676px;top:529px;width:30px;letter-spacing:-0.2px">KAR</div>
<div class="t" style="left:706px;top:529px;width:120px;text-align:right;">90,00</div>
<div class="t" style="left:836px;top:529px;width:36px;letter-spacing:-0.2px">EUR</div>
<div class="t" style="left:873px;top:529px;width:107px;text-align:right;">0</div>
<div class="t" style="left:986px;top:529px;width:120px;text-align:right;">0,00</div>
<div class="t" style="left:1115px;top:529px;width:35px;letter-spacing:-0.2px">EUR</div>
<div style="left:88px;top:547px;width:1062px;height:18px;background:#fffcbb;"></div>
<div style="left:88px;top:564px;width:1062px;height:1px;background:#e2e0d0;"></div>
<div class="tb" style="left:261px;top:547px;width:88px;text-align:right;letter-spacing:-0.3px">2</div>
<div class="tb" style="left:355px;top:547px;width:127px;text-align:right;letter-spacing:-0.3px">2</div>
<div class="tb" style="left:490px;top:547px;width:30px;letter-spacing:-0.9px">KAR</div>
<div class="tb" style="left:706px;top:547px;width:121px;text-align:right;letter-spacing:-0.3px">90,00</div>
<div class="tb" style="left:835px;top:547px;width:36px;letter-spacing:-0.9px">EUR</div>
<div class="tb" style="left:873px;top:547px;width:108px;text-align:right;letter-spacing:-0.3px">0</div>
<div class="tb" style="left:986px;top:547px;width:121px;text-align:right;letter-spacing:-0.3px">0,00</div>
<div style="left:264px;top:554px;width:4px;height:4px;background:#6e6400;"></div>
<div style="left:358px;top:554px;width:4px;height:4px;background:#6e6400;"></div>
<div style="left:709px;top:554px;width:4px;height:4px;background:#6e6400;"></div>
<div style="left:876px;top:554px;width:4px;height:4px;background:#6e6400;"></div>
<div style="left:989px;top:554px;width:4px;height:4px;background:#6e6400;"></div>
<div style="left:9px;top:96px;width:79px;height:18px;background:#fffcbe;"></div>
<div style="left:9px;top:113px;width:79px;height:1px;background:#e2e0d0;"></div>
<div class="t" style="left:12px;top:95px;width:70px;">L500700</div>
<div style="left:9px;top:114px;width:79px;height:18px;background:#fffcbb;"></div>
<div style="left:9px;top:131px;width:79px;height:1px;background:#e2e0d0;"></div>
<div class="t" style="left:12px;top:113px;width:70px;">L500700</div>
<svg style="position:absolute;left:74px;top:115px" width="16" height="13" viewBox="0 0 16 13"><path d="M6 11.6h8.6v-4.6M11.4 7v-4.6" fill="none" stroke="#b8b020" stroke-width="1.1"/><path d="M4.8 2h5.6v4.8h3.2v4.2h-12v-4.2h3.2z" fill="#fff" stroke="#2a2a10" stroke-width="1.2"/><rect x="6.3" y="8" width="1" height="1" fill="#555"/><rect x="8" y="8" width="1" height="1" fill="#555"/></svg>
<div style="left:9px;top:132px;width:79px;height:18px;background:#fffcbe;"></div>
<div style="left:9px;top:149px;width:79px;height:1px;background:#e2e0d0;"></div>
<div class="t" style="left:12px;top:131px;width:70px;">L700100</div>
<div style="left:9px;top:150px;width:79px;height:18px;background:#fffcbb;"></div>
<div style="left:9px;top:167px;width:79px;height:1px;background:#e2e0d0;"></div>
<div class="t" style="left:12px;top:149px;width:70px;">L700100</div>
<svg style="position:absolute;left:74px;top:151px" width="16" height="13" viewBox="0 0 16 13"><path d="M6 11.6h8.6v-4.6M11.4 7v-4.6" fill="none" stroke="#b8b020" stroke-width="1.1"/><path d="M4.8 2h5.6v4.8h3.2v4.2h-12v-4.2h3.2z" fill="#fff" stroke="#2a2a10" stroke-width="1.2"/><rect x="6.3" y="8" width="1" height="1" fill="#555"/><rect x="8" y="8" width="1" height="1" fill="#555"/></svg>
<div style="left:9px;top:168px;width:79px;height:90px;background:#fffcbe;"></div>
<div style="left:9px;top:257px;width:79px;height:1px;background:#e2e0d0;"></div>
<div class="t" style="left:12px;top:167px;width:70px;">L700101</div>
<div style="left:9px;top:258px;width:79px;height:18px;background:#fffcbb;"></div>
<div style="left:9px;top:275px;width:79px;height:1px;background:#e2e0d0;"></div>
<div class="t" style="left:12px;top:258px;width:70px;">L700101</div>
<svg style="position:absolute;left:74px;top:259px" width="16" height="13" viewBox="0 0 16 13"><path d="M6 11.6h8.6v-4.6M11.4 7v-4.6" fill="none" stroke="#b8b020" stroke-width="1.1"/><path d="M4.8 2h5.6v4.8h3.2v4.2h-12v-4.2h3.2z" fill="#fff" stroke="#2a2a10" stroke-width="1.2"/><rect x="6.3" y="8" width="1" height="1" fill="#555"/><rect x="8" y="8" width="1" height="1" fill="#555"/></svg>
<div style="left:9px;top:276px;width:79px;height:55px;background:#fffcbe;"></div>
<div style="left:9px;top:330px;width:79px;height:1px;background:#e2e0d0;"></div>
<div class="t" style="left:12px;top:276px;width:70px;">L700102</div>
<div style="left:9px;top:331px;width:79px;height:18px;background:#fffcbb;"></div>
<div style="left:9px;top:348px;width:79px;height:1px;background:#e2e0d0;"></div>
<div class="t" style="left:12px;top:330px;width:70px;">L700102</div>
<svg style="position:absolute;left:74px;top:332px" width="16" height="13" viewBox="0 0 16 13"><path d="M6 11.6h8.6v-4.6M11.4 7v-4.6" fill="none" stroke="#b8b020" stroke-width="1.1"/><path d="M4.8 2h5.6v4.8h3.2v4.2h-12v-4.2h3.2z" fill="#fff" stroke="#2a2a10" stroke-width="1.2"/><rect x="6.3" y="8" width="1" height="1" fill="#555"/><rect x="8" y="8" width="1" height="1" fill="#555"/></svg>
<div style="left:9px;top:349px;width:79px;height:18px;background:#fffcbe;"></div>
<div style="left:9px;top:366px;width:79px;height:1px;background:#e2e0d0;"></div>
<div class="t" style="left:12px;top:348px;width:70px;">L700103</div>
<div style="left:9px;top:367px;width:79px;height:18px;background:#fffcbb;"></div>
<div style="left:9px;top:384px;width:79px;height:1px;background:#e2e0d0;"></div>
<div class="t" style="left:12px;top:366px;width:70px;">L700103</div>
<svg style="position:absolute;left:74px;top:368px" width="16" height="13" viewBox="0 0 16 13"><path d="M6 11.6h8.6v-4.6M11.4 7v-4.6" fill="none" stroke="#b8b020" stroke-width="1.1"/><path d="M4.8 2h5.6v4.8h3.2v4.2h-12v-4.2h3.2z" fill="#fff" stroke="#2a2a10" stroke-width="1.2"/><rect x="6.3" y="8" width="1" height="1" fill="#555"/><rect x="8" y="8" width="1" height="1" fill="#555"/></svg>
<div style="left:9px;top:385px;width:79px;height:18px;background:#fffcbe;"></div>
<div style="left:9px;top:402px;width:79px;height:1px;background:#e2e0d0;"></div>
<div class="t" style="left:12px;top:384px;width:70px;">L700104</div>
<div style="left:9px;top:403px;width:79px;height:18px;background:#fffcbb;"></div>
<div style="left:9px;top:420px;width:79px;height:1px;background:#e2e0d0;"></div>
<div class="t" style="left:12px;top:402px;width:70px;">L700104</div>
<svg style="position:absolute;left:74px;top:404px" width="16" height="13" viewBox="0 0 16 13"><path d="M6 11.6h8.6v-4.6M11.4 7v-4.6" fill="none" stroke="#b8b020" stroke-width="1.1"/><path d="M4.8 2h5.6v4.8h3.2v4.2h-12v-4.2h3.2z" fill="#fff" stroke="#2a2a10" stroke-width="1.2"/><rect x="6.3" y="8" width="1" height="1" fill="#555"/><rect x="8" y="8" width="1" height="1" fill="#555"/></svg>
<div style="left:9px;top:421px;width:79px;height:18px;background:#fffcbe;"></div>
<div style="left:9px;top:438px;width:79px;height:1px;background:#e2e0d0;"></div>
<div class="t" style="left:12px;top:420px;width:70px;">L900101</div>
<div style="left:9px;top:439px;width:79px;height:18px;background:#fffcbb;"></div>
<div style="left:9px;top:456px;width:79px;height:1px;background:#e2e0d0;"></div>
<div class="t" style="left:12px;top:439px;width:70px;">L900101</div>
<svg style="position:absolute;left:74px;top:440px" width="16" height="13" viewBox="0 0 16 13"><path d="M6 11.6h8.6v-4.6M11.4 7v-4.6" fill="none" stroke="#b8b020" stroke-width="1.1"/><path d="M4.8 2h5.6v4.8h3.2v4.2h-12v-4.2h3.2z" fill="#fff" stroke="#2a2a10" stroke-width="1.2"/><rect x="6.3" y="8" width="1" height="1" fill="#555"/><rect x="8" y="8" width="1" height="1" fill="#555"/></svg>
<div style="left:9px;top:457px;width:79px;height:18px;background:#fffcbe;"></div>
<div style="left:9px;top:474px;width:79px;height:1px;background:#e2e0d0;"></div>
<div class="t" style="left:12px;top:457px;width:70px;">L900200</div>
<div style="left:9px;top:475px;width:79px;height:18px;background:#fffcbb;"></div>
<div style="left:9px;top:492px;width:79px;height:1px;background:#e2e0d0;"></div>
<div class="t" style="left:12px;top:475px;width:70px;">L900200</div>
<svg style="position:absolute;left:74px;top:476px" width="16" height="13" viewBox="0 0 16 13"><path d="M6 11.6h8.6v-4.6M11.4 7v-4.6" fill="none" stroke="#b8b020" stroke-width="1.1"/><path d="M4.8 2h5.6v4.8h3.2v4.2h-12v-4.2h3.2z" fill="#fff" stroke="#2a2a10" stroke-width="1.2"/><rect x="6.3" y="8" width="1" height="1" fill="#555"/><rect x="8" y="8" width="1" height="1" fill="#555"/></svg>
<div style="left:9px;top:493px;width:79px;height:18px;background:#fffcbe;"></div>
<div style="left:9px;top:510px;width:79px;height:1px;background:#e2e0d0;"></div>
<div class="t" style="left:12px;top:493px;width:70px;">M0100</div>
<div style="left:9px;top:511px;width:79px;height:18px;background:#fffcbb;"></div>
<div style="left:9px;top:528px;width:79px;height:1px;background:#e2e0d0;"></div>
<div class="t" style="left:12px;top:511px;width:70px;">M0100</div>
<svg style="position:absolute;left:74px;top:512px" width="16" height="13" viewBox="0 0 16 13"><path d="M6 11.6h8.6v-4.6M11.4 7v-4.6" fill="none" stroke="#b8b020" stroke-width="1.1"/><path d="M4.8 2h5.6v4.8h3.2v4.2h-12v-4.2h3.2z" fill="#fff" stroke="#2a2a10" stroke-width="1.2"/><rect x="6.3" y="8" width="1" height="1" fill="#555"/><rect x="8" y="8" width="1" height="1" fill="#555"/></svg>
<div style="left:9px;top:529px;width:79px;height:18px;background:#fffcbe;"></div>
<div style="left:9px;top:546px;width:79px;height:1px;background:#e2e0d0;"></div>
<div class="t" style="left:12px;top:529px;width:70px;">M0110</div>
<div style="left:9px;top:547px;width:79px;height:18px;background:#fffcbb;"></div>
<div style="left:9px;top:564px;width:79px;height:1px;background:#e2e0d0;"></div>
<div class="t" style="left:12px;top:547px;width:70px;">M0110</div>
<svg style="position:absolute;left:74px;top:548px" width="16" height="13" viewBox="0 0 16 13"><path d="M6 11.6h8.6v-4.6M11.4 7v-4.6" fill="none" stroke="#b8b020" stroke-width="1.1"/><path d="M4.8 2h5.6v4.8h3.2v4.2h-12v-4.2h3.2z" fill="#fff" stroke="#2a2a10" stroke-width="1.2"/><rect x="6.3" y="8" width="1" height="1" fill="#555"/><rect x="8" y="8" width="1" height="1" fill="#555"/></svg>
<svg style="position:absolute;left:8px;top:95px" width="82" height="20" viewBox="0 0 82 20"><path d="M6 1.5H1.5V17.5H6M75 1.5H79.5V17.5H75" fill="none" stroke="#e81c1c" stroke-width="1.5"/></svg>
<div style="left:9px;top:565px;width:1141px;height:20px;background:#fff200;"></div>
<div class="tb" style="left:261px;top:566px;width:87px;text-align:right;">10</div>
<div class="tb" style="left:355px;top:566px;width:126px;text-align:right;">10</div>
<div class="tb" style="left:490px;top:566px;width:30px;">KAR</div>
<div class="tb" style="left:706px;top:566px;width:120px;text-align:right;">12.233,00</div>
<div class="tb" style="left:837px;top:566px;width:36px;">EUR</div>
<div class="tb" style="left:873px;top:566px;width:107px;text-align:right;">0</div>
<div class="tb" style="left:986px;top:566px;width:120px;text-align:right;">14.050,05</div>
<svg style="position:absolute;left:12px;top:568px" width="10" height="6"><path d="M1 5V1.5h6V5" fill="#fff" stroke="#222" stroke-width="1.3"/></svg>
</div>
<svg style="position:absolute;left:0;top:0" width="1180" height="596">
 <path d="M1156.5 104.5l3.5-3.5 3.5 3.5" fill="none" stroke="#444" stroke-width="1.9"/>
 <path d="M1156.5 118.5l3.5 3.5 3.5-3.5" fill="none" stroke="#444" stroke-width="1.9"/>
 <path d="M1156.5 545.5l3.5-3.5 3.5 3.5" fill="none" stroke="#444" stroke-width="1.9"/>
 <path d="M1156.5 560l3.5 3.5 3.5-3.5" fill="none" stroke="#444" stroke-width="1.9"/>
 <rect x="1155" y="263" width="10" height="241" fill="#b7c1cb"/>
 <path d="M1157.5 381.5h5M1157.5 384.5h5M1157.5 387.5h5" stroke="#fff" stroke-width="1"/>
 <path d="M17.5 577l-3.5 3.5 3.5 3.5" fill="none" stroke="#444" stroke-width="1.9"/>
 <path d="M32 577l3.5 3.5-3.5 3.5" fill="none" stroke="#444" stroke-width="1.9"/>
 <path d="M1125.5 577l-3.5 3.5 3.5 3.5" fill="none" stroke="#444" stroke-width="1.9"/>
 <path d="M1138 577l3.5 3.5-3.5 3.5" fill="none" stroke="#444" stroke-width="1.9"/>
 <rect x="45" y="576" width="872" height="10" fill="#b7c1cb"/>
 <path d="M478.5 578.5v5M481.5 578.5v5M484.5 578.5v5" stroke="#fff" stroke-width="1"/>
 <rect x="1175" y="0" width="1" height="596" fill="#e6e6e6"/>
</svg>
</body></html>
